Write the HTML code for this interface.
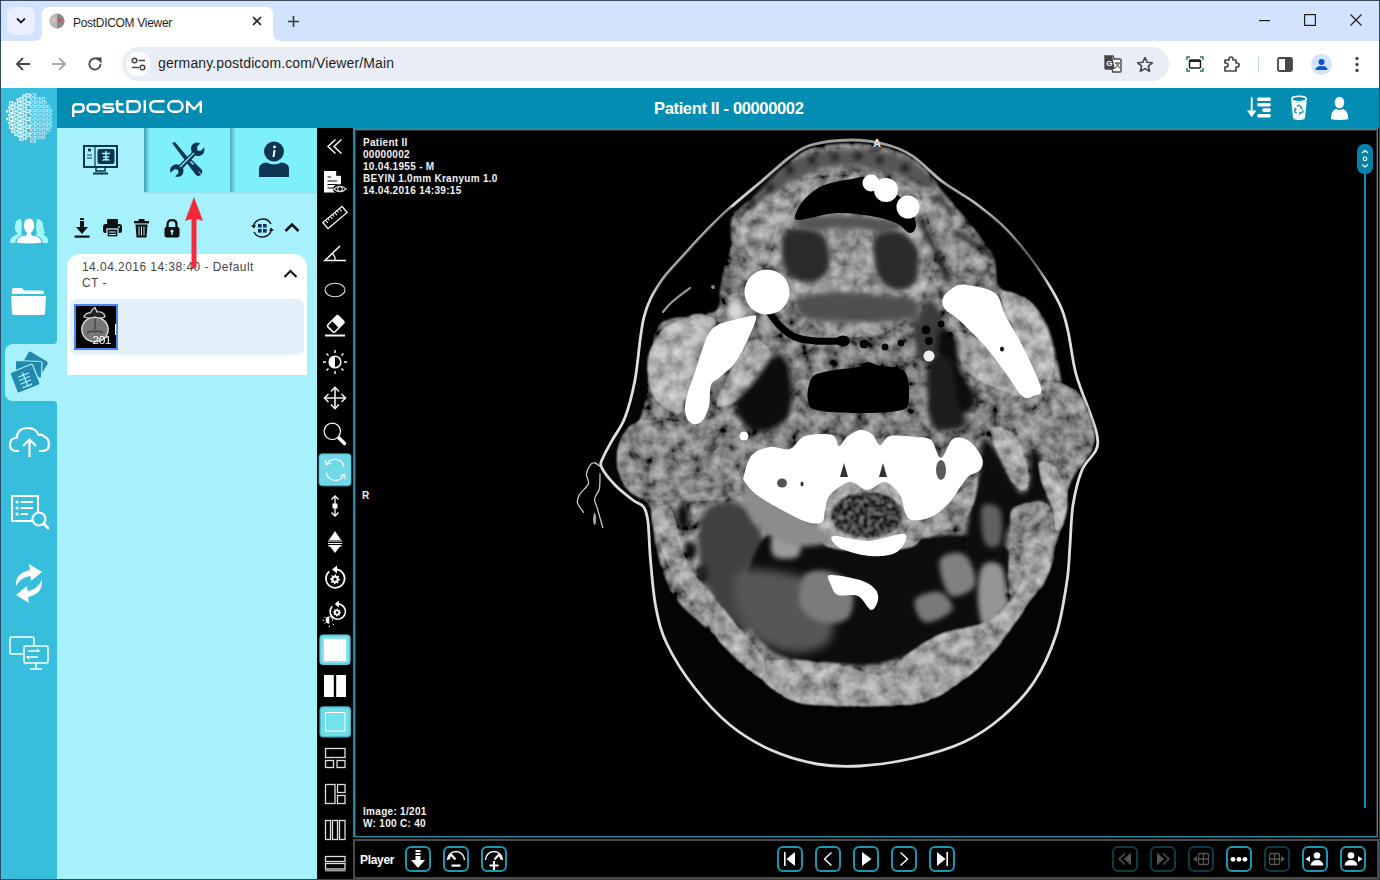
<!DOCTYPE html>
<html><head><meta charset="utf-8">
<style>
*{margin:0;padding:0;box-sizing:border-box}
html,body{width:1380px;height:880px;overflow:hidden;background:#fff;font-family:"Liberation Sans",sans-serif;position:relative}
.abs{position:absolute}
svg{position:absolute;overflow:visible}
.t{position:absolute;white-space:nowrap;line-height:1}
</style></head><body>
<div class="abs" style="left:0;top:0;width:1380px;height:41px;background:#d3e3fd"></div>
<div class="abs" style="left:0;top:41px;width:1380px;height:47px;background:#fff"></div>
<!-- CHROME -->
<div class="abs" style="left:0;top:0;width:1380px;height:1px;background:#3a4a5c"></div>
<div class="abs" style="left:0;top:0;width:1px;height:880px;background:#2b4a66;z-index:50"></div>
<div class="abs" style="left:1379px;top:0;width:1px;height:880px;background:#2b4a66;z-index:50"></div>
<!-- dropdown -->
<div class="abs" style="left:7px;top:7px;width:28px;height:28px;border-radius:8px;background:#e9effc"></div>
<svg style="left:15px;top:16px" width="12" height="10"><path d="M2 2.5 L6 6.5 L10 2.5" stroke="#1f1f1f" stroke-width="1.8" fill="none"/></svg>
<!-- tab -->
<svg style="left:34px;top:7px" width="248" height="34"><path d="M0 34 Q8 34 8 26 L8 8 Q8 0 16 0 L231 0 Q239 0 239 8 L239 26 Q239 34 247 34 Z" fill="#fff"/></svg>
<!-- favicon -->
<svg style="left:49px;top:13px" width="16" height="16"><circle cx="8" cy="8" r="7.5" fill="#b8b8b8"/><path d="M8 0.5 A7.5 7.5 0 0 1 8 15.5 Z" fill="#8a8a8a"/><circle cx="5" cy="7" r="2.2" fill="#f3b8c0" opacity=".8"/><circle cx="11" cy="7" r="1.6" fill="#e8394a"/></svg>
<div class="t" style="left:73px;top:16.5px;font-size:12px;color:#1f1f1f;letter-spacing:-0.3px">PostDICOM Viewer</div>
<svg style="left:252px;top:16px" width="10" height="10"><path d="M1 1 L9 9 M9 1 L1 9" stroke="#1f1f1f" stroke-width="1.6"/></svg>
<svg style="left:288px;top:16px" width="11" height="11"><path d="M5.5 0 V11 M0 5.5 H11" stroke="#3a3a3a" stroke-width="1.6"/></svg>
<!-- window controls -->
<svg style="left:1259px;top:20px" width="11" height="2"><rect width="11" height="1.2" fill="#1f1f1f"/></svg>
<svg style="left:1304px;top:14px" width="12" height="12"><rect x="0.6" y="0.6" width="10.8" height="10.8" stroke="#1f1f1f" stroke-width="1.2" fill="none"/></svg>
<svg style="left:1350px;top:14px" width="12" height="12"><path d="M0.5 0.5 L11.5 11.5 M11.5 0.5 L0.5 11.5" stroke="#1f1f1f" stroke-width="1.2"/></svg>
<!-- nav buttons -->
<svg style="left:15px;top:56px" width="16" height="16"><path d="M15 8 H2 M8 2 L2 8 L8 14" stroke="#474747" stroke-width="1.8" fill="none"/></svg>
<svg style="left:51px;top:56px" width="16" height="16"><path d="M1 8 H14 M8 2 L14 8 L8 14" stroke="#a8a8a8" stroke-width="1.8" fill="none"/></svg>
<svg style="left:87px;top:56px" width="16" height="16"><path d="M13.5 8 A5.6 5.6 0 1 1 11.6 3.8" stroke="#474747" stroke-width="1.8" fill="none"/><path d="M8.5 1.5 L14.5 1.5 L14.5 7.5 Z" fill="#474747"/></svg>
<!-- omnibox -->
<div class="abs" style="left:122px;top:47px;width:1047px;height:34px;border-radius:17px;background:#e9eef6"></div>
<div class="abs" style="left:126px;top:52px;width:24px;height:24px;border-radius:12px;background:#fff"></div>
<svg style="left:131px;top:57px" width="16" height="14"><circle cx="3.5" cy="3.5" r="2.3" stroke="#474747" stroke-width="1.5" fill="none"/><path d="M7.5 3.5 H14 M1 10.5 H8" stroke="#474747" stroke-width="1.7"/><circle cx="11.5" cy="10.5" r="2.3" stroke="#474747" stroke-width="1.5" fill="none"/></svg>
<div class="t" style="left:158px;top:56px;font-size:14px;color:#1f1f1f;letter-spacing:0.12px">germany.postdicom.com/Viewer/Main</div>
<!-- translate -->
<svg style="left:1104px;top:55px" width="18" height="18"><path d="M1 1 H9 L10 4 H16 Q17 4 17 5 V16 Q17 17 16 17 H9 L8 14 H2 Q1 14 1 13 Z" fill="#fff" stroke="#474747" stroke-width="1.4"/><path d="M1 1 H8 L11 14 H2 Q1 14 1 13 Z" fill="#474747"/><text x="2.3" y="11" font-size="8" font-weight="bold" fill="#fff" font-family="Liberation Sans">G</text><path d="M11 8 H16 M13.5 7 V8 M12 8 Q13 12 16 13 M15 8 Q14 12 11 13" stroke="#474747" stroke-width="1" fill="none"/></svg>
<svg style="left:1136px;top:56px" width="18" height="17"><path d="M9 1.5 L11.2 6.3 L16.3 6.8 L12.4 10.2 L13.6 15.3 L9 12.6 L4.4 15.3 L5.6 10.2 L1.7 6.8 L6.8 6.3 Z" stroke="#474747" stroke-width="1.6" fill="none" stroke-linejoin="round"/></svg>
<!-- screen capture -->
<svg style="left:1186px;top:56px" width="18" height="16"><path d="M1 4 V1 H4 M14 1 H17 V4 M17 12 V15 H14 M4 15 H1 V12" stroke="#188038" stroke-width="1.4" fill="none"/><rect x="3.5" y="4" width="11" height="8" rx="1" stroke="#1f1f1f" stroke-width="1.5" fill="none"/><rect x="3.5" y="4" width="11" height="2" fill="#1f1f1f"/></svg>
<!-- puzzle -->
<svg style="left:1223px;top:55px" width="18" height="18"><path d="M2 5 H6 V4 A2 2 0 0 1 10 4 V5 H13 V8 H14 A2 2 0 0 1 14 12 H13 V16 H2 V12 H3 A2 2 0 0 0 3 8 H2 Z" stroke="#474747" stroke-width="1.7" fill="none" stroke-linejoin="round"/></svg>
<div class="abs" style="left:1258px;top:57px;width:1px;height:15px;background:#c4d6f5"></div>
<svg style="left:1277px;top:57px" width="16" height="15"><rect x="1" y="1" width="14" height="13" rx="1.5" stroke="#474747" stroke-width="1.8" fill="none"/><rect x="8" y="1" width="7" height="13" fill="#474747"/></svg>
<div class="abs" style="left:1311px;top:54px;width:21px;height:21px;border-radius:50%;background:#d3e3fd"></div>
<svg style="left:1313px;top:56px" width="17" height="17"><circle cx="8.5" cy="6" r="3" fill="#0b57d0"/><path d="M2.5 14 Q2.5 10 8.5 10 Q14.5 10 14.5 14 Z" fill="#0b57d0"/></svg>
<svg style="left:1354px;top:56px" width="6" height="17"><circle cx="3" cy="2.5" r="1.7" fill="#474747"/><circle cx="3" cy="8.5" r="1.7" fill="#474747"/><circle cx="3" cy="14.5" r="1.7" fill="#474747"/></svg>
<!-- APP BASE -->
<div class="abs" style="left:0;top:88px;width:1380px;height:792px;background:#000"></div>
<div class="abs" style="left:57px;top:88px;width:1323px;height:40px;background:#038db2"></div>
<div class="abs" style="left:57px;top:128px;width:260px;height:752px;background:#a6f1fc"></div>
<div class="abs" style="left:48px;top:330px;width:12px;height:85px;background:#a6f1fc"></div>
<div class="abs" style="left:0;top:88px;width:57px;height:256px;background:#38bedd;border-bottom-right-radius:4px"></div>
<div class="abs" style="left:0;top:401px;width:57px;height:479px;background:#38bedd;border-top-right-radius:4px"></div>
<div class="abs" style="left:0;top:330px;width:16px;height:80px;background:#38bedd"></div>
<div class="abs" style="left:5px;top:344px;width:60px;height:57px;background:#a6f1fc;border-radius:8px 0 0 8px"></div>
<!-- logo globe -->
<svg style="left:0;top:0" width="60" height="150"><rect x="26.0" y="94.0" width="3.2" height="3.2" fill="none" stroke="#fff" stroke-width="1.1"/><rect x="22.4" y="94.5" width="2.4" height="2.4" fill="#fff" opacity=".85"/><rect x="24.5" y="98.4" width="2.4" height="2.4" fill="#fff" opacity=".85"/><rect x="19.9" y="97.9" width="3.2" height="3.2" fill="none" stroke="#fff" stroke-width="1.1"/><rect x="16.3" y="98.4" width="2.4" height="2.4" fill="#fff" opacity=".85"/><rect x="26.0" y="101.8" width="3.2" height="3.2" fill="none" stroke="#fff" stroke-width="1.1"/><rect x="22.4" y="102.3" width="2.4" height="2.4" fill="#fff" opacity=".85"/><rect x="17.8" y="101.8" width="3.2" height="3.2" fill="none" stroke="#fff" stroke-width="1.1"/><rect x="14.2" y="102.3" width="2.4" height="2.4" fill="#fff" opacity=".85"/><rect x="9.6" y="101.8" width="3.2" height="3.2" fill="none" stroke="#fff" stroke-width="1.1"/><rect x="24.5" y="106.2" width="2.4" height="2.4" fill="#fff" opacity=".85"/><rect x="19.9" y="105.7" width="3.2" height="3.2" fill="none" stroke="#fff" stroke-width="1.1"/><rect x="16.3" y="106.2" width="2.4" height="2.4" fill="#fff" opacity=".85"/><rect x="11.7" y="105.7" width="3.2" height="3.2" fill="none" stroke="#fff" stroke-width="1.1"/><rect x="8.1" y="106.2" width="2.4" height="2.4" fill="#fff" opacity=".85"/><rect x="26.0" y="109.6" width="3.2" height="3.2" fill="none" stroke="#fff" stroke-width="1.1"/><rect x="22.4" y="110.1" width="2.4" height="2.4" fill="#fff" opacity=".85"/><rect x="17.8" y="109.6" width="3.2" height="3.2" fill="none" stroke="#fff" stroke-width="1.1"/><rect x="14.2" y="110.1" width="2.4" height="2.4" fill="#fff" opacity=".85"/><rect x="9.6" y="109.6" width="3.2" height="3.2" fill="none" stroke="#fff" stroke-width="1.1"/><rect x="6.0" y="110.1" width="2.4" height="2.4" fill="#fff" opacity=".85"/><rect x="24.5" y="114.0" width="2.4" height="2.4" fill="#fff" opacity=".85"/><rect x="19.9" y="113.5" width="3.2" height="3.2" fill="none" stroke="#fff" stroke-width="1.1"/><rect x="16.3" y="114.0" width="2.4" height="2.4" fill="#fff" opacity=".85"/><rect x="11.7" y="113.5" width="3.2" height="3.2" fill="none" stroke="#fff" stroke-width="1.1"/><rect x="8.1" y="114.0" width="2.4" height="2.4" fill="#fff" opacity=".85"/><rect x="26.0" y="117.4" width="3.2" height="3.2" fill="none" stroke="#fff" stroke-width="1.1"/><rect x="22.4" y="117.9" width="2.4" height="2.4" fill="#fff" opacity=".85"/><rect x="17.8" y="117.4" width="3.2" height="3.2" fill="none" stroke="#fff" stroke-width="1.1"/><rect x="14.2" y="117.9" width="2.4" height="2.4" fill="#fff" opacity=".85"/><rect x="9.6" y="117.4" width="3.2" height="3.2" fill="none" stroke="#fff" stroke-width="1.1"/><rect x="6.0" y="117.9" width="2.4" height="2.4" fill="#fff" opacity=".85"/><rect x="24.5" y="121.8" width="2.4" height="2.4" fill="#fff" opacity=".85"/><rect x="19.9" y="121.3" width="3.2" height="3.2" fill="none" stroke="#fff" stroke-width="1.1"/><rect x="16.3" y="121.8" width="2.4" height="2.4" fill="#fff" opacity=".85"/><rect x="11.7" y="121.3" width="3.2" height="3.2" fill="none" stroke="#fff" stroke-width="1.1"/><rect x="8.1" y="121.8" width="2.4" height="2.4" fill="#fff" opacity=".85"/><rect x="26.0" y="125.2" width="3.2" height="3.2" fill="none" stroke="#fff" stroke-width="1.1"/><rect x="22.4" y="125.7" width="2.4" height="2.4" fill="#fff" opacity=".85"/><rect x="17.8" y="125.2" width="3.2" height="3.2" fill="none" stroke="#fff" stroke-width="1.1"/><rect x="14.2" y="125.7" width="2.4" height="2.4" fill="#fff" opacity=".85"/><rect x="9.6" y="125.2" width="3.2" height="3.2" fill="none" stroke="#fff" stroke-width="1.1"/><rect x="24.5" y="129.6" width="2.4" height="2.4" fill="#fff" opacity=".85"/><rect x="19.9" y="129.1" width="3.2" height="3.2" fill="none" stroke="#fff" stroke-width="1.1"/><rect x="16.3" y="129.6" width="2.4" height="2.4" fill="#fff" opacity=".85"/><rect x="11.7" y="129.1" width="3.2" height="3.2" fill="none" stroke="#fff" stroke-width="1.1"/><rect x="26.0" y="133.0" width="3.2" height="3.2" fill="none" stroke="#fff" stroke-width="1.1"/><rect x="22.4" y="133.5" width="2.4" height="2.4" fill="#fff" opacity=".85"/><rect x="17.8" y="133.0" width="3.2" height="3.2" fill="none" stroke="#fff" stroke-width="1.1"/><rect x="14.2" y="133.5" width="2.4" height="2.4" fill="#fff" opacity=".85"/><rect x="24.5" y="137.4" width="2.4" height="2.4" fill="#fff" opacity=".85"/><rect x="19.9" y="136.9" width="3.2" height="3.2" fill="none" stroke="#fff" stroke-width="1.1"/><rect x="30.0" y="93.5" width="0.9" height="3" fill="#fff" opacity=".75"/><rect x="31.8" y="93.8" width="2.6" height="2.6" fill="none" stroke="#fff" stroke-width=".7" opacity=".7"/><rect x="35.2" y="93.5" width="0.9" height="3" fill="#fff" opacity=".75"/><rect x="30.0" y="97.3" width="0.9" height="3" fill="#fff" opacity=".75"/><rect x="31.8" y="97.6" width="2.6" height="2.6" fill="none" stroke="#fff" stroke-width=".7" opacity=".7"/><rect x="35.2" y="97.3" width="0.9" height="3" fill="#fff" opacity=".75"/><rect x="37.0" y="97.6" width="2.6" height="2.6" fill="none" stroke="#fff" stroke-width=".7" opacity=".7"/><rect x="40.4" y="97.3" width="0.9" height="3" fill="#fff" opacity=".75"/><rect x="42.2" y="97.6" width="2.6" height="2.6" fill="none" stroke="#fff" stroke-width=".7" opacity=".7"/><rect x="30.0" y="101.2" width="0.9" height="3" fill="#fff" opacity=".75"/><rect x="31.8" y="101.5" width="2.6" height="2.6" fill="none" stroke="#fff" stroke-width=".7" opacity=".7"/><rect x="35.2" y="101.2" width="0.9" height="3" fill="#fff" opacity=".75"/><rect x="37.0" y="101.5" width="2.6" height="2.6" fill="none" stroke="#fff" stroke-width=".7" opacity=".7"/><rect x="40.4" y="101.2" width="0.9" height="3" fill="#fff" opacity=".75"/><rect x="42.2" y="101.5" width="2.6" height="2.6" fill="none" stroke="#fff" stroke-width=".7" opacity=".7"/><rect x="45.6" y="101.2" width="0.9" height="3" fill="#fff" opacity=".75"/><rect x="30.0" y="105.0" width="0.9" height="3" fill="#fff" opacity=".75"/><rect x="31.8" y="105.3" width="2.6" height="2.6" fill="none" stroke="#fff" stroke-width=".7" opacity=".7"/><rect x="35.2" y="105.0" width="0.9" height="3" fill="#fff" opacity=".75"/><rect x="37.0" y="105.3" width="2.6" height="2.6" fill="none" stroke="#fff" stroke-width=".7" opacity=".7"/><rect x="40.4" y="105.0" width="0.9" height="3" fill="#fff" opacity=".75"/><rect x="42.2" y="105.3" width="2.6" height="2.6" fill="none" stroke="#fff" stroke-width=".7" opacity=".7"/><rect x="45.6" y="105.0" width="0.9" height="3" fill="#fff" opacity=".75"/><rect x="47.4" y="105.3" width="2.6" height="2.6" fill="none" stroke="#fff" stroke-width=".7" opacity=".7"/><rect x="30.0" y="108.9" width="0.9" height="3" fill="#fff" opacity=".75"/><rect x="31.8" y="109.2" width="2.6" height="2.6" fill="none" stroke="#fff" stroke-width=".7" opacity=".7"/><rect x="35.2" y="108.9" width="0.9" height="3" fill="#fff" opacity=".75"/><rect x="37.0" y="109.2" width="2.6" height="2.6" fill="none" stroke="#fff" stroke-width=".7" opacity=".7"/><rect x="40.4" y="108.9" width="0.9" height="3" fill="#fff" opacity=".75"/><rect x="42.2" y="109.2" width="2.6" height="2.6" fill="none" stroke="#fff" stroke-width=".7" opacity=".7"/><rect x="45.6" y="108.9" width="0.9" height="3" fill="#fff" opacity=".75"/><rect x="47.4" y="109.2" width="2.6" height="2.6" fill="none" stroke="#fff" stroke-width=".7" opacity=".7"/><rect x="50.8" y="108.9" width="0.9" height="3" fill="#fff" opacity=".75"/><rect x="30.0" y="112.8" width="0.9" height="3" fill="#fff" opacity=".75"/><rect x="31.8" y="113.0" width="2.6" height="2.6" fill="none" stroke="#fff" stroke-width=".7" opacity=".7"/><rect x="35.2" y="112.8" width="0.9" height="3" fill="#fff" opacity=".75"/><rect x="37.0" y="113.0" width="2.6" height="2.6" fill="none" stroke="#fff" stroke-width=".7" opacity=".7"/><rect x="40.4" y="112.8" width="0.9" height="3" fill="#fff" opacity=".75"/><rect x="42.2" y="113.0" width="2.6" height="2.6" fill="none" stroke="#fff" stroke-width=".7" opacity=".7"/><rect x="45.6" y="112.8" width="0.9" height="3" fill="#fff" opacity=".75"/><rect x="47.4" y="113.0" width="2.6" height="2.6" fill="none" stroke="#fff" stroke-width=".7" opacity=".7"/><rect x="50.8" y="112.8" width="0.9" height="3" fill="#fff" opacity=".75"/><rect x="30.0" y="116.6" width="0.9" height="3" fill="#fff" opacity=".75"/><rect x="31.8" y="116.9" width="2.6" height="2.6" fill="none" stroke="#fff" stroke-width=".7" opacity=".7"/><rect x="35.2" y="116.6" width="0.9" height="3" fill="#fff" opacity=".75"/><rect x="37.0" y="116.9" width="2.6" height="2.6" fill="none" stroke="#fff" stroke-width=".7" opacity=".7"/><rect x="40.4" y="116.6" width="0.9" height="3" fill="#fff" opacity=".75"/><rect x="42.2" y="116.9" width="2.6" height="2.6" fill="none" stroke="#fff" stroke-width=".7" opacity=".7"/><rect x="45.6" y="116.6" width="0.9" height="3" fill="#fff" opacity=".75"/><rect x="47.4" y="116.9" width="2.6" height="2.6" fill="none" stroke="#fff" stroke-width=".7" opacity=".7"/><rect x="50.8" y="116.6" width="0.9" height="3" fill="#fff" opacity=".75"/><rect x="30.0" y="120.5" width="0.9" height="3" fill="#fff" opacity=".75"/><rect x="31.8" y="120.8" width="2.6" height="2.6" fill="none" stroke="#fff" stroke-width=".7" opacity=".7"/><rect x="35.2" y="120.5" width="0.9" height="3" fill="#fff" opacity=".75"/><rect x="37.0" y="120.8" width="2.6" height="2.6" fill="none" stroke="#fff" stroke-width=".7" opacity=".7"/><rect x="40.4" y="120.5" width="0.9" height="3" fill="#fff" opacity=".75"/><rect x="42.2" y="120.8" width="2.6" height="2.6" fill="none" stroke="#fff" stroke-width=".7" opacity=".7"/><rect x="45.6" y="120.5" width="0.9" height="3" fill="#fff" opacity=".75"/><rect x="47.4" y="120.8" width="2.6" height="2.6" fill="none" stroke="#fff" stroke-width=".7" opacity=".7"/><rect x="50.8" y="120.5" width="0.9" height="3" fill="#fff" opacity=".75"/><rect x="30.0" y="124.3" width="0.9" height="3" fill="#fff" opacity=".75"/><rect x="31.8" y="124.6" width="2.6" height="2.6" fill="none" stroke="#fff" stroke-width=".7" opacity=".7"/><rect x="35.2" y="124.3" width="0.9" height="3" fill="#fff" opacity=".75"/><rect x="37.0" y="124.6" width="2.6" height="2.6" fill="none" stroke="#fff" stroke-width=".7" opacity=".7"/><rect x="40.4" y="124.3" width="0.9" height="3" fill="#fff" opacity=".75"/><rect x="42.2" y="124.6" width="2.6" height="2.6" fill="none" stroke="#fff" stroke-width=".7" opacity=".7"/><rect x="45.6" y="124.3" width="0.9" height="3" fill="#fff" opacity=".75"/><rect x="47.4" y="124.6" width="2.6" height="2.6" fill="none" stroke="#fff" stroke-width=".7" opacity=".7"/><rect x="50.8" y="124.3" width="0.9" height="3" fill="#fff" opacity=".75"/><rect x="30.0" y="128.2" width="0.9" height="3" fill="#fff" opacity=".75"/><rect x="31.8" y="128.5" width="2.6" height="2.6" fill="none" stroke="#fff" stroke-width=".7" opacity=".7"/><rect x="35.2" y="128.2" width="0.9" height="3" fill="#fff" opacity=".75"/><rect x="37.0" y="128.5" width="2.6" height="2.6" fill="none" stroke="#fff" stroke-width=".7" opacity=".7"/><rect x="40.4" y="128.2" width="0.9" height="3" fill="#fff" opacity=".75"/><rect x="42.2" y="128.5" width="2.6" height="2.6" fill="none" stroke="#fff" stroke-width=".7" opacity=".7"/><rect x="45.6" y="128.2" width="0.9" height="3" fill="#fff" opacity=".75"/><rect x="47.4" y="128.5" width="2.6" height="2.6" fill="none" stroke="#fff" stroke-width=".7" opacity=".7"/><rect x="30.0" y="132.0" width="0.9" height="3" fill="#fff" opacity=".75"/><rect x="31.8" y="132.3" width="2.6" height="2.6" fill="none" stroke="#fff" stroke-width=".7" opacity=".7"/><rect x="35.2" y="132.0" width="0.9" height="3" fill="#fff" opacity=".75"/><rect x="37.0" y="132.3" width="2.6" height="2.6" fill="none" stroke="#fff" stroke-width=".7" opacity=".7"/><rect x="40.4" y="132.0" width="0.9" height="3" fill="#fff" opacity=".75"/><rect x="42.2" y="132.3" width="2.6" height="2.6" fill="none" stroke="#fff" stroke-width=".7" opacity=".7"/><rect x="45.6" y="132.0" width="0.9" height="3" fill="#fff" opacity=".75"/><rect x="30.0" y="135.8" width="0.9" height="3" fill="#fff" opacity=".75"/><rect x="31.8" y="136.2" width="2.6" height="2.6" fill="none" stroke="#fff" stroke-width=".7" opacity=".7"/><rect x="35.2" y="135.8" width="0.9" height="3" fill="#fff" opacity=".75"/><rect x="37.0" y="136.2" width="2.6" height="2.6" fill="none" stroke="#fff" stroke-width=".7" opacity=".7"/><rect x="40.4" y="135.8" width="0.9" height="3" fill="#fff" opacity=".75"/><rect x="42.2" y="136.2" width="2.6" height="2.6" fill="none" stroke="#fff" stroke-width=".7" opacity=".7"/><rect x="30.0" y="139.7" width="0.9" height="3" fill="#fff" opacity=".75"/><rect x="31.8" y="140.0" width="2.6" height="2.6" fill="none" stroke="#fff" stroke-width=".7" opacity=".7"/><rect x="35.2" y="139.7" width="0.9" height="3" fill="#fff" opacity=".75"/></svg>
<!-- postDICOM wordmark -->
<svg style="left:0;top:0" width="210" height="120"><g fill="none" stroke="#fff" stroke-width="2.4" stroke-linejoin="round">
<path d="M73.2 117 V107.5 Q73.2 104.2 76.5 104.2 H80.3 Q83.6 104.2 83.6 107.5 V108.5 Q83.6 111.7 80.3 111.7 H73.2"/>
<rect x="87.5" y="104.2" width="11.8" height="7.5" rx="3.3"/>
<path d="M113.6 104.2 H106.3 Q103.3 104.2 103.3 106.1 Q103.3 107.9 106.3 107.9 H110.3 Q113.3 107.9 113.3 109.8 Q113.3 111.7 110.3 111.7 H102.8"/>
<path d="M117.3 100 V108.3 Q117.3 111.7 120.7 111.7 H124.3 M115.5 104.2 H123.3"/>
<path d="M127.5 101.3 V111.7 H135.3 Q139.8 111.7 139.8 106.5 Q139.8 101.3 135.3 101.3 Z"/>
<path d="M144.8 100.2 V112.9"/>
<path d="M164.5 101.3 H155.5 Q150.3 101.3 150.3 106.5 Q150.3 111.7 155.5 111.7 H164.5"/>
<rect x="168.3" y="101.3" width="14.2" height="10.4" rx="5"/>
<path d="M187.2 112.9 V101.8 L194 109.2 L200.8 101.8 V112.9"/>
</g></svg>
<!-- title -->
<div class="t" style="left:654px;top:99.5px;font-size:16.5px;font-weight:bold;color:#fff;letter-spacing:-0.35px">Patient II - 00000002</div>
<!-- header right icons -->
<svg style="left:1240px;top:90px" width="120" height="36">
<path d="M11.7 7.4 V22" stroke="#fff" stroke-width="1.9"/><path d="M7 20.5 L11.7 27.2 L16.4 20.5 Z" fill="#fff"/>
<rect x="17" y="7.4" width="14" height="3.6" rx="1.8" fill="#fff"/><rect x="17" y="13" width="14" height="3.6" rx="1.8" fill="#fff"/><rect x="22" y="18.3" width="9" height="3.6" rx="1.8" fill="#fff"/><rect x="17" y="23.9" width="14" height="3.6" rx="1.8" fill="#fff"/>
<ellipse cx="59" cy="9" rx="7.3" ry="2.7" stroke="#fff" stroke-width="1.5" fill="none"/>
<path d="M51.3 11 Q59 14 66.7 11 L65 28 Q59 30 53 28 Z" fill="#fff"/>
<path d="M53.5 28.8 Q59 30.5 64.5 28.8" stroke="#fff" stroke-width="1" fill="none"/>
<g stroke="#038db2" stroke-width="1.2" fill="none"><path d="M57 16.5 L59 15 L61.5 17.5"/><path d="M62.8 19.5 L63 22 L60 23"/><path d="M57 23 L54.5 22 L55.5 19"/></g>
<g fill="#038db2"><path d="M61 16 L63 18.5 L60.5 19 Z"/><path d="M61 23.5 L59 25 L59.5 21.8 Z"/><path d="M54 20.5 L55 17.5 L57 19.5 Z"/></g>
<ellipse cx="99.5" cy="12.6" rx="4.8" ry="5.8" fill="#fff"/>
<path d="M91 29.2 Q90.6 20.5 96 19 Q99.5 20.8 103 19 Q108.4 20.5 108.3 29.2 Q99.5 30.8 91 29.2 Z" fill="#fff"/>
</svg>
<!-- nav icons -->
<svg style="left:9px;top:217px" width="40" height="28">
 <path d="M12 2 Q6 2 6 9 Q5 11 6 12 Q7 16 9 17 Q3 19 1 23 V26 H12 Q12 21 16 19 L12 17 Q13 13 13 8 Z" fill="#a4f6fb"/>
 <path d="M28 2 Q34 2 34 9 Q35 14 36 16 L34 17 Q37 19 39 22 V26 H28 Q28 21 24 19 L28 17 Q27 13 27 8 Z" fill="#a4f6fb"/>
 <path d="M20 1 Q25.5 1 25.5 8 Q26.5 9 25.5 11 Q24.5 15 22.5 16 L23 18 Q33 19 33 26 Q20 28 7 26 Q7 19 17 18 L17.5 16 Q15.5 15 14.5 11 Q13.5 9 14.5 8 Q14.5 1 20 1 Z" fill="#fff" stroke="#38bedd" stroke-width="1.2"/>
</svg>
<svg style="left:11px;top:287px" width="36" height="29"><path d="M1 3 Q1 1 3 1 H11 L13 3.5 H31 Q33 3.5 33 5.5 V7 H1 Z" fill="#fff"/><path d="M0 9 H35 L34 26 Q34 28 32 28 H3 Q1 28 1 26 Z" fill="#fff"/></svg>
<svg style="left:4px;top:340px" width="56" height="65">
 <path d="M24.5 12.5 Q25.5 11 27 12 L43 21.5 Q44.5 22.5 43.5 24 L35 38 L18 24 Z" fill="#2388ad"/>
 <path d="M11.5 22 Q11.5 20.5 13 20.5 L36.5 21.5 Q38 21.5 38 23 L37.5 38 L11 36 Z" fill="#2388ad" stroke="#a6f1fc" stroke-width="1.2"/>
 <path d="M6.5 35 Q5.5 33.5 7 32.5 L26.5 24.5 Q28 24 28.8 25.5 L36 43 Q36.5 44.5 35 45 L15 53 Q13.5 53.5 13 52 Z" fill="#2388ad" stroke="#a6f1fc" stroke-width="1.3"/>
 <g stroke="#a6f1fc" stroke-width="1.3" fill="none" stroke-linecap="round"><path d="M18.5 33 L24 46"/><path d="M14.5 37 L24.5 33 M15.5 40.5 L25.5 36.5 M17 44 L26.5 40"/><path d="M19 47.5 Q22 47 23.5 45.5 Q26 46 27.5 44"/></g>
</svg>
<svg style="left:9px;top:426px" width="41" height="32"><path d="M10 25 H7 Q1 25 1 18.5 Q1 12 7.5 12 Q8.5 2 19 2 Q27 2 29.5 9 Q33 8 35 10.5 Q40 12 40 18.5 Q40 25 33 25 H30" stroke="#fff" stroke-width="2.2" fill="none"/><path d="M20.5 31 V14 M14 20 L20.5 13.5 L27 20" stroke="#fff" stroke-width="2.2" fill="none"/></svg>
<svg style="left:11px;top:495px" width="39" height="35"><rect x="1" y="1" width="26" height="25" stroke="#fff" stroke-width="2" fill="none"/><circle cx="6" cy="7" r="1.5" fill="#fff"/><circle cx="6" cy="13" r="1.5" fill="#fff"/><circle cx="6" cy="19" r="1.5" fill="#fff"/><path d="M9.5 7 H22 M9.5 13 H22 M9.5 19 H17" stroke="#fff" stroke-width="2"/><circle cx="28" cy="24" r="6.5" fill="#38bedd" stroke="#fff" stroke-width="2.2"/><path d="M32.5 28.5 L37 33" stroke="#fff" stroke-width="2.6" stroke-linecap="round"/></svg>
<svg style="left:13px;top:563px" width="32" height="41"><path d="M3 23 Q2 10 17 7 L16 1 L29 9 L18 18 L17.5 13 Q8 14 3 23 Z" fill="#fff"/><path d="M29 17 Q30 31 15 34 L16 40 L3 32 L14 23 L14.5 28 Q24 27 29 17 Z" fill="#fff"/></svg>
<svg style="left:9px;top:636px" width="41" height="35"><rect x="1" y="1" width="24" height="17" rx="1.5" stroke="#fff" stroke-width="1.5" fill="#38bedd"/><rect x="15" y="10" width="24" height="17" rx="1.5" stroke="#fff" stroke-width="1.5" fill="#38bedd"/><path d="M27 27 V32 M21 33 H33" stroke="#fff" stroke-width="1.5"/><path d="M19 15 H30 L28 13 M29 21 H18 L20 23" stroke="#fff" stroke-width="1.3" fill="none"/></svg>
<!-- PANEL -->
<div class="abs" style="left:57px;top:128px;width:87px;height:64px;background:#a6f1fc"></div>
<div class="abs" style="left:144px;top:128px;width:173px;height:64px;background:#7ef0fc"></div>
<div class="abs" style="left:144px;top:128px;width:6px;height:64px;background:linear-gradient(90deg,rgba(0,60,80,.45),rgba(0,60,80,0))"></div>
<div class="abs" style="left:230px;top:128px;width:6px;height:64px;background:linear-gradient(90deg,rgba(0,60,80,.4),rgba(0,60,80,0))"></div>
<div class="abs" style="left:144px;top:192px;width:173px;height:2px;background:linear-gradient(180deg,rgba(0,60,80,.12),rgba(0,60,80,0))"></div>
<!-- monitor icon -->
<svg style="left:83px;top:145px" width="36" height="31"><rect x="1" y="1" width="33" height="21" stroke="#0b3550" stroke-width="2" fill="none"/><path d="M12 2 V21" stroke="#0b3550" stroke-width="1.2"/><path d="M5 5 H8 M6.5 3.5 V6.5" stroke="#0b3550" stroke-width="2"/><path d="M4 10 H9 M4 13 H9" stroke="#0b3550" stroke-width="1"/><rect x="14.5" y="4" width="17" height="15" rx="2" fill="#0b3550"/><path d="M23 6 V16 M19 8.5 H27 M20 12 H26 M19.5 15.5 Q23 13 26.5 15.5" stroke="#a6f1fc" stroke-width="1.5" fill="none"/><path d="M13 23 V26 H22 V23" stroke="#0b3550" stroke-width="1.5" fill="none"/><path d="M10 28.5 H25" stroke="#0b3550" stroke-width="2"/></svg>
<!-- tools icon -->
<svg style="left:169px;top:141px" width="36" height="37">
 <path d="M3 2 L6 1 L21 19 L18 22 Z" fill="#0b3550"/>
 <path d="M17 21 L21 17 L33 29 Q34 31 32.5 33 L31 34.5 Q29 35.5 27 34 Z" fill="#0b3550"/>
 <path d="M21.5 20.5 L24.5 23.5" stroke="#7ef0fc" stroke-width="1.6"/>
 <path d="M29.5 30.5 L32 33" stroke="#7ef0fc" stroke-width="1"/>
 <path d="M28 1.5 Q22 2 22 8 Q22 10 23 11 L10 24 Q8 23 6 23.5 Q1 25 1 30 L1.5 31.5 L6 28 L9 29 L9.5 32 L6 35.5 Q14 37 14.5 30 Q14.5 28 14 27 L26.5 14.5 Q28 15 30 15 Q35.5 14 35.5 8 L35 6.5 L31.5 10 L28.5 9.5 L28 6 L31 2.2 Q30 1.5 28 1.5 Z" fill="#0b3550"/>
 <path d="M11 26 L25 12" stroke="#7ef0fc" stroke-width="1.2"/>
</svg>
<!-- info person icon -->
<svg style="left:258px;top:141px" width="32" height="37"><circle cx="16" cy="10.5" r="10" fill="#0b3550"/><path d="M16.5 4.5 a1.5 1.5 0 1 1 -0.01 0 M15.5 9 H17.5 L16.5 16 H14.5 Z" fill="#fff"/><path d="M1 36 V28 Q1 22 9 21.5 Q12 23.5 16 23.5 Q20 23.5 23 21.5 Q31 22 31 28 V36 Z" fill="#0b3550"/></svg>
<!-- action icons -->
<svg style="left:74px;top:218px" width="16" height="20"><rect x="6" y="0" width="4" height="2" fill="#111"/><path d="M6 3 H10 V9 H14 L8 16 L2 9 H6 Z" fill="#111"/><rect x="0.5" y="17.5" width="15" height="2.2" fill="#111"/></svg>
<svg style="left:103px;top:219px" width="19" height="18"><rect x="4" y="0" width="11" height="5" rx="1" fill="#111"/><rect x="0" y="5" width="19" height="9" rx="2.5" fill="#111"/><rect x="4" y="10" width="11" height="8" fill="#111" stroke="#a6f1fc" stroke-width="1.3"/><path d="M6 13 H13 M6 15.5 H13" stroke="#a6f1fc" stroke-width="1"/><circle cx="16" cy="8" r=".9" fill="#a6f1fc"/></svg>
<svg style="left:134px;top:219px" width="15" height="19"><rect x="4.5" y="0" width="6" height="2" fill="#111"/><rect x="0" y="2" width="15" height="2.4" fill="#111"/><path d="M1.5 5.5 H13.5 L12.5 18.5 H2.5 Z" fill="#111"/><path d="M5 7.5 V16.5 M7.5 7.5 V16.5 M10 7.5 V16.5" stroke="#a6f1fc" stroke-width="1"/></svg>
<svg style="left:164px;top:219px" width="16" height="19"><path d="M3.5 8 V5.5 Q3.5 1.2 8 1.2 Q12.5 1.2 12.5 5.5 V8" stroke="#111" stroke-width="2.3" fill="none"/><rect x="0.5" y="8" width="15" height="10.5" rx="2" fill="#111"/><circle cx="8" cy="12" r="1.6" fill="#a6f1fc"/><rect x="7.3" y="12" width="1.4" height="4" fill="#a6f1fc"/></svg>
<svg style="left:250px;top:217px" width="25" height="22"><path d="M3.5 9 A9.5 9.5 0 0 1 21 7" stroke="#111" stroke-width="1.4" fill="none"/><path d="M21.5 13 A9.5 9.5 0 0 1 4 15" stroke="#111" stroke-width="1.4" fill="none"/><path d="M1 8.5 L4 11.5 L6 8 Z M24 13.5 L21 10.5 L19 14 Z" fill="#111"/><rect x="8" y="7" width="3.6" height="3.6" fill="#142a5a"/><rect x="13" y="7" width="3.6" height="3.6" fill="#142a5a"/><rect x="8" y="12" width="3.6" height="3.6" fill="#142a5a"/><rect x="13" y="12" width="3.6" height="3.6" fill="#142a5a"/></svg>
<svg style="left:284px;top:222px" width="16" height="11"><path d="M1.5 9 L8 2.5 L14.5 9" stroke="#111" stroke-width="2.6" fill="none"/></svg>
<!-- study card -->
<div class="abs" style="left:67px;top:254px;width:240px;height:121px;background:#fff;border-radius:13px 13px 0 0"></div>
<div class="t" style="left:82px;top:259px;font-size:12px;line-height:16px;letter-spacing:0.45px;color:#45444a">14.04.2016 14:38:40 - Default<br>CT -</div>
<svg style="left:283px;top:269px" width="15" height="10"><path d="M1.5 8 L7.5 2 L13.5 8" stroke="#111" stroke-width="2.1" fill="none"/></svg>
<div class="abs" style="left:70px;top:299px;width:234px;height:56px;background:#e4f0fa;border-radius:7px"></div>
<div class="abs" style="left:74px;top:304px;width:44px;height:46px;background:#000;border:2px solid #4a86f7"></div>
<svg style="left:70px;top:300px" width="52" height="54">
<ellipse cx="25" cy="29.5" rx="13.2" ry="12.3" fill="#777" stroke="#e8e8e8" stroke-width="1.3"/>
<path d="M25 19 V30 M17 33 Q21 30 25 32 Q29 30 33 33" stroke="#3a3a3a" stroke-width="1.2" fill="none"/>
<path d="M14 16 Q17 12 20 13 L23 9 L25 7.5 L27 12 Q31 11 34 14 L35 17 Q30 19 25 17 Q19 19 14 17 Z" fill="#222" stroke="#ddd" stroke-width="1.2"/>
<rect x="45" y="24" width="1.2" height="11" fill="#fff"/>
</svg>
<div class="t" style="left:92.5px;top:335px;font-size:12px;color:#fff;letter-spacing:-0.5px;transform:scaleY(0.85);transform-origin:0 0">201</div>
<!-- red arrow -->
<svg style="left:184px;top:196px" width="20" height="72"><path d="M10 22 V70" stroke="#f8283c" stroke-width="5" stroke-linecap="round"/><path d="M10 1 L19 25 Q10 21 1 25 Z" fill="#f8283c"/></svg>
<!-- CT -->
<svg style="left:0;top:0" width="1380" height="880">
<defs>
<linearGradient id="skg" gradientUnits="userSpaceOnUse" x1="0" y1="138" x2="0" y2="215"><stop offset="0" stop-color="#9a9a9a"/><stop offset="1" stop-color="#dedede"/></linearGradient>
<clipPath id="vclip"><rect x="356" y="131" width="1020" height="705"/></clipPath>
<filter id="soft05" x="-50%" y="-50%" width="200%" height="200%"><feGaussianBlur stdDeviation=".6"/></filter>
<filter id="soft1" x="-20%" y="-20%" width="140%" height="140%"><feGaussianBlur stdDeviation="1.5"/></filter>
<filter id="soft2" x="-30%" y="-30%" width="160%" height="160%"><feGaussianBlur stdDeviation="5"/></filter>
<filter id="soft" x="-30%" y="-30%" width="160%" height="160%"><feGaussianBlur stdDeviation="2.5"/></filter>
<filter id="tex" x="-5%" y="-5%" width="110%" height="110%">
 <feGaussianBlur in="SourceGraphic" stdDeviation="1.2" result="b"/>
 <feTurbulence type="fractalNoise" baseFrequency="0.075" numOctaves="3" seed="5" result="n"/>
 <feColorMatrix in="n" type="matrix" values="1 0 0 0 0  1 0 0 0 0  1 0 0 0 0  0 0 0 0 1" result="g"/>
 <feComposite in="b" in2="g" operator="arithmetic" k1="0" k2="1" k3="0.7" k4="-0.35" result="m"/>
 <feComposite in="m" in2="b" operator="in"/>
</filter>
<filter id="tex2" x="-5%" y="-5%" width="110%" height="110%">
 <feTurbulence type="fractalNoise" baseFrequency="0.25" numOctaves="2" seed="9" result="n"/>
 <feColorMatrix in="n" type="matrix" values="1 0 0 0 0  1 0 0 0 0  1 0 0 0 0  0 0 0 0 1" result="g"/>
 <feComposite in="SourceGraphic" in2="g" operator="arithmetic" k1="0" k2="1" k3="0.6" k4="-0.3" result="m"/>
 <feComposite in="m" in2="SourceGraphic" operator="in" result="c"/>
 <feGaussianBlur in="c" stdDeviation="1"/>
</filter>
</defs>
<g clip-path="url(#vclip)">
<path d="M851.0 140.0 C863.5 139.9 875.8 141.9 886.0 144.5 C896.2 147.1 902.4 149.3 912.0 155.7 C921.6 162.1 933.0 174.8 943.6 182.7 C954.2 190.6 964.8 195.4 975.4 203.4 C986.0 211.4 996.2 219.0 1007.0 230.4 C1017.8 241.8 1031.2 259.3 1040.0 271.7 C1048.8 284.1 1055.3 295.1 1060.0 305.0 C1064.7 314.9 1065.3 319.5 1068.0 331.0 C1070.7 342.5 1072.3 360.3 1076.0 374.0 C1079.7 387.7 1086.5 402.8 1090.0 413.0 C1093.5 423.2 1096.0 428.8 1097.0 435.0 C1098.0 441.2 1098.5 444.2 1096.0 450.0 C1093.5 455.8 1085.8 460.8 1082.0 470.0 C1078.2 479.2 1075.0 492.5 1073.0 505.0 C1071.0 517.5 1071.0 532.3 1070.0 545.0 C1069.0 557.7 1069.3 566.0 1067.0 581.0 C1064.7 596.0 1061.5 618.2 1056.0 635.0 C1050.5 651.8 1043.0 668.3 1034.0 682.0 C1025.0 695.7 1013.7 707.0 1002.0 717.0 C990.3 727.0 978.7 735.2 964.0 742.0 C949.3 748.8 931.3 754.0 914.0 758.0 C896.7 762.0 876.2 765.0 860.0 766.0 C843.8 767.0 831.8 766.7 817.0 764.0 C802.2 761.3 785.5 756.5 771.0 750.0 C756.5 743.5 742.8 735.5 730.0 725.0 C717.2 714.5 704.5 700.5 694.0 687.0 C683.5 673.5 673.3 657.2 667.0 644.0 C660.7 630.8 658.8 622.0 656.0 608.0 C653.2 594.0 651.8 574.3 650.5 560.0 C649.2 545.7 649.1 530.8 648.0 522.0 C646.9 513.2 646.2 510.7 643.7 507.0 C641.2 503.3 637.6 503.7 632.8 500.0 C628.0 496.3 620.2 490.5 615.0 485.0 C609.8 479.5 603.4 471.6 601.4 467.0 C599.4 462.4 601.2 462.2 603.0 457.7 C604.8 453.2 608.6 446.7 612.3 440.0 C616.0 433.3 621.2 427.5 625.0 417.5 C628.8 407.5 631.8 396.8 635.0 380.0 C638.2 363.2 639.8 333.2 644.0 317.0 C648.2 300.8 653.3 293.3 660.0 283.0 C666.7 272.7 675.8 264.2 684.0 255.0 C692.2 245.8 701.2 236.0 709.0 228.0 C716.8 220.0 722.0 215.0 731.0 207.0 C740.0 199.0 753.2 188.3 763.0 180.0 C772.8 171.7 782.0 162.8 790.0 157.0 C798.0 151.2 800.8 147.8 811.0 145.0 C821.2 142.2 838.5 140.1 851.0 140.0Z" fill="#040404" stroke="url(#skg)" stroke-width="2.8"/>
<path d="M851.0 143.0 C863.5 142.9 875.8 145.0 886.0 147.5 C896.2 150.0 903.8 152.6 912.0 158.0 C920.2 163.4 925.5 169.5 935.0 180.0 C944.5 190.5 959.2 208.3 969.0 221.0 C978.8 233.7 988.8 245.0 994.0 256.0 C999.2 267.0 994.5 280.0 1000.0 287.0 C1005.5 294.0 1018.8 291.7 1027.0 298.0 C1035.2 304.3 1043.5 314.0 1049.0 325.0 C1054.5 336.0 1057.2 352.2 1060.0 364.0 C1062.8 375.8 1062.0 384.2 1066.0 396.0 C1070.0 407.8 1079.7 426.0 1084.0 435.0 C1088.3 444.0 1092.3 444.8 1092.0 450.0 C1091.7 455.2 1085.7 460.2 1082.0 466.0 C1078.3 471.8 1073.0 476.0 1070.0 485.0 C1067.0 494.0 1066.3 510.0 1064.0 520.0 C1061.7 530.0 1058.2 537.2 1056.0 545.0 C1053.8 552.8 1055.5 557.3 1051.0 567.0 C1046.5 576.7 1038.2 589.3 1029.0 603.0 C1019.8 616.7 1006.0 636.8 996.0 649.0 C986.0 661.2 980.3 667.3 969.0 676.0 C957.7 684.7 941.7 696.0 928.0 701.0 C914.3 706.0 903.2 705.2 887.0 706.0 C870.8 706.8 846.7 706.8 831.0 706.0 C815.3 705.2 804.3 705.5 793.0 701.0 C781.7 696.5 777.2 690.8 763.0 679.0 C748.8 667.2 723.0 644.0 708.0 630.0 C693.0 616.0 681.7 608.7 673.0 595.0 C664.3 581.3 659.8 562.5 656.0 548.0 C652.2 533.5 654.3 517.7 650.0 508.0 C645.7 498.3 635.5 496.8 630.0 490.0 C624.5 483.2 618.0 476.2 617.0 467.0 C616.0 457.8 620.2 443.2 624.0 435.0 C627.8 426.8 636.0 427.2 640.0 418.0 C644.0 408.8 646.2 391.3 648.0 380.0 C649.8 368.7 648.7 359.7 651.0 350.0 C653.3 340.3 654.8 328.0 662.0 322.0 C669.2 316.0 685.0 316.0 694.0 314.0 C703.0 312.0 711.8 313.8 716.0 310.0 C720.2 306.2 717.8 297.8 719.0 291.0 C720.2 284.2 721.2 276.8 723.0 269.0 C724.8 261.2 728.7 252.7 730.0 244.0 C731.3 235.3 725.5 226.2 731.0 217.0 C736.5 207.8 753.2 198.2 763.0 189.0 C772.8 179.8 782.0 168.8 790.0 162.0 C798.0 155.2 800.8 151.2 811.0 148.0 C821.2 144.8 838.5 143.1 851.0 143.0Z" fill="#7c7c7c" filter="url(#tex)"/>
<path d="M780.0 190.0 C790.8 181.8 810.0 177.3 830.0 176.0 C850.0 174.7 882.5 175.5 900.0 182.0 C917.5 188.5 929.2 202.0 935.0 215.0 C940.8 228.0 938.3 244.2 935.0 260.0 C931.7 275.8 924.2 297.5 915.0 310.0 C905.8 322.5 894.2 330.8 880.0 335.0 C865.8 339.2 843.3 338.3 830.0 335.0 C816.7 331.7 809.2 325.8 800.0 315.0 C790.8 304.2 780.8 285.0 775.0 270.0 C769.2 255.0 764.2 238.3 765.0 225.0 C765.8 211.7 769.2 198.2 780.0 190.0Z" fill="#979797" filter="url(#tex)"/>
<path d="M760.0 200.0 C768.3 193.0 783.3 178.7 790.0 178.0 C796.7 177.3 801.7 187.3 800.0 196.0 C798.3 204.7 785.8 218.5 780.0 230.0 C774.2 241.5 770.8 261.7 765.0 265.0 C759.2 268.3 749.2 257.5 745.0 250.0 C740.8 242.5 737.5 228.3 740.0 220.0 C742.5 211.7 751.7 207.0 760.0 200.0Z" fill="#9a9a9a" filter="url(#tex)"/>
<path d="M920.0 185.0 C923.3 179.2 945.8 195.8 955.0 205.0 C964.2 214.2 969.2 227.5 975.0 240.0 C980.8 252.5 992.5 273.3 990.0 280.0 C987.5 286.7 969.2 286.7 960.0 280.0 C950.8 273.3 941.7 255.8 935.0 240.0 C928.3 224.2 916.7 190.8 920.0 185.0Z" fill="#8a8a8a" filter="url(#tex)"/>
<path d="M790.0 163.0 C807.7 153.0 831.8 150.8 851.0 150.0 C870.2 149.2 891.0 152.7 905.0 158.0 C919.0 163.3 931.7 177.3 935.0 182.0 C938.3 186.7 932.5 187.7 925.0 186.0 C917.5 184.3 902.3 175.5 890.0 172.0 C877.7 168.5 864.3 165.0 851.0 165.0 C837.7 165.0 823.5 167.0 810.0 172.0 C796.5 177.0 780.8 188.7 770.0 195.0 C759.2 201.3 741.7 215.3 745.0 210.0 C748.3 204.7 772.3 173.0 790.0 163.0Z" fill="#555" filter="url(#soft)"/>
<circle cx="790" cy="170" r="4" fill="#1a1a1a" filter="url(#soft)"/>
<circle cx="812" cy="160" r="4" fill="#1a1a1a" filter="url(#soft)"/>
<circle cx="835" cy="157" r="3.5" fill="#1a1a1a" filter="url(#soft)"/>
<circle cx="858" cy="156" r="4" fill="#1a1a1a" filter="url(#soft)"/>
<circle cx="880" cy="160" r="3.5" fill="#1a1a1a" filter="url(#soft)"/>
<circle cx="905" cy="168" r="4" fill="#1a1a1a" filter="url(#soft)"/>
<circle cx="770" cy="188" r="4" fill="#1a1a1a" filter="url(#soft)"/>
<circle cx="752" cy="203" r="3.5" fill="#1a1a1a" filter="url(#soft)"/>
<circle cx="874" cy="206" r="3" fill="#1a1a1a" filter="url(#soft)"/>
<circle cx="935" cy="200" r="3" fill="#1a1a1a" filter="url(#soft)"/>
<path d="M694.0 314.0 C701.5 312.5 708.3 315.0 712.0 317.0 C715.7 319.0 717.7 318.3 716.0 326.0 C714.3 333.7 706.8 351.3 702.0 363.0 C697.2 374.7 690.7 387.5 687.0 396.0 C683.3 404.5 683.8 412.0 680.0 414.0 C676.2 416.0 668.8 411.7 664.0 408.0 C659.2 404.3 653.8 399.5 651.0 392.0 C648.2 384.5 646.5 371.5 647.0 363.0 C647.5 354.5 650.7 347.2 654.0 341.0 C657.3 334.8 660.3 330.5 667.0 326.0 C673.7 321.5 686.5 315.5 694.0 314.0Z" fill="#b0b0b0" filter="url(#tex)"/>
<path d="M1000.0 293.0 C1002.7 288.5 1018.8 292.7 1027.0 298.0 C1035.2 303.3 1044.3 315.8 1049.0 325.0 C1053.7 334.2 1054.5 343.8 1055.0 353.0 C1055.5 362.2 1054.3 373.7 1052.0 380.0 C1049.7 386.3 1045.2 393.7 1041.0 391.0 C1036.8 388.3 1032.0 375.0 1027.0 364.0 C1022.0 353.0 1015.5 336.8 1011.0 325.0 C1006.5 313.2 997.3 297.5 1000.0 293.0Z" fill="#acacac" filter="url(#tex)"/>
<path d="M956.0 331.0 C960.7 329.2 975.3 335.2 984.0 342.0 C992.7 348.8 1001.7 363.0 1008.0 372.0 C1014.3 381.0 1023.3 392.8 1022.0 396.0 C1020.7 399.2 1008.7 394.5 1000.0 391.0 C991.3 387.5 977.3 381.3 970.0 375.0 C962.7 368.7 958.3 360.3 956.0 353.0 C953.7 345.7 951.3 332.8 956.0 331.0Z" fill="#a6a6a6" filter="url(#tex)"/>
<path d="M727.0 377.0 C732.5 366.2 742.3 346.3 749.0 341.0 C755.7 335.7 763.3 340.8 767.0 345.0 C770.7 349.2 773.3 358.8 771.0 366.0 C768.7 373.2 759.0 381.8 753.0 388.0 C747.0 394.2 741.2 400.0 735.0 403.0 C728.8 406.0 717.3 410.3 716.0 406.0 C714.7 401.7 721.5 387.8 727.0 377.0Z" fill="#a8a8a8" filter="url(#tex)"/>
<path d="M921.0 222.0 C923.3 226.7 930.3 240.3 935.0 250.0 C939.7 259.7 946.7 275.0 949.0 280.0" fill="none" stroke="#1e1e1e" stroke-width="5" stroke-linecap="round" filter="url(#soft)"/>
<path d="M957.0 233.0 C960.0 235.0 968.8 240.8 975.0 245.0 C981.2 249.2 990.8 255.8 994.0 258.0" fill="none" stroke="#222" stroke-width="5" stroke-linecap="round" filter="url(#soft)"/>
<path d="M940.0 200.0 C942.0 202.0 950.0 210.0 952.0 212.0" fill="none" stroke="#2a2a2a" stroke-width="4" stroke-linecap="round" filter="url(#soft)"/>
<path d="M731.0 208.0 C734.7 206.0 731.2 211.0 731.0 217.0 C730.8 223.0 731.3 235.3 730.0 244.0 C728.7 252.7 724.8 261.2 723.0 269.0 C721.2 276.8 720.2 284.2 719.0 291.0 C717.8 297.8 720.2 306.5 716.0 310.0 C711.8 313.5 703.0 310.3 694.0 312.0 C685.0 313.7 669.7 319.0 662.0 320.0 C654.3 321.0 648.3 323.8 648.0 318.0 C647.7 312.2 654.0 295.3 660.0 285.0 C666.0 274.7 675.8 265.3 684.0 256.0 C692.2 246.7 701.2 237.0 709.0 229.0 C716.8 221.0 727.3 210.0 731.0 208.0Z" fill="#050505" filter="url(#soft1)"/>
<path d="M936.0 182.0 C937.0 179.3 963.2 196.8 975.0 205.0 C986.8 213.2 996.2 219.8 1007.0 231.0 C1017.8 242.2 1030.8 255.5 1040.0 272.0 C1049.2 288.5 1057.3 312.0 1062.0 330.0 C1066.7 348.0 1067.7 370.0 1068.0 380.0 C1068.3 390.0 1066.2 395.0 1064.0 390.0 C1061.8 385.0 1058.2 361.3 1055.0 350.0 C1051.8 338.7 1049.7 331.0 1045.0 322.0 C1040.3 313.0 1034.5 302.0 1027.0 296.0 C1019.5 290.0 1005.5 292.7 1000.0 286.0 C994.5 279.3 999.2 266.8 994.0 256.0 C988.8 245.2 978.7 233.3 969.0 221.0 C959.3 208.7 935.0 184.7 936.0 182.0Z" fill="#050505" filter="url(#soft1)"/>
<path d="M784.0 235.0 C787.8 230.5 798.0 227.2 805.0 228.0 C812.0 228.8 822.2 233.0 826.0 240.0 C829.8 247.0 830.3 263.0 828.0 270.0 C825.7 277.0 818.3 281.0 812.0 282.0 C805.7 283.0 795.0 280.5 790.0 276.0 C785.0 271.5 783.0 261.8 782.0 255.0 C781.0 248.2 780.2 239.5 784.0 235.0Z" fill="#2a2a2a" filter="url(#soft)"/>
<path d="M875.0 238.0 C878.7 230.8 893.0 230.0 900.0 232.0 C907.0 234.0 914.5 241.7 917.0 250.0 C919.5 258.3 918.7 275.3 915.0 282.0 C911.3 288.7 901.2 291.2 895.0 290.0 C888.8 288.8 881.3 283.7 878.0 275.0 C874.7 266.3 871.3 245.2 875.0 238.0Z" fill="#2a2a2a" filter="url(#soft)"/>
<path d="M800.0 300.0 C805.8 295.7 826.7 292.7 840.0 292.0 C853.3 291.3 867.5 294.7 880.0 296.0 C892.5 297.3 909.7 296.3 915.0 300.0 C920.3 303.7 921.2 314.3 912.0 318.0 C902.8 321.7 877.8 322.0 860.0 322.0 C842.2 322.0 815.0 321.7 805.0 318.0 C795.0 314.3 794.2 304.3 800.0 300.0Z" fill="#505050" filter="url(#soft)"/>
<path d="M800.0 218.0 C807.5 215.7 833.3 215.3 850.0 216.0 C866.7 216.7 893.3 219.3 900.0 222.0 C906.7 224.7 898.3 231.0 890.0 232.0 C881.7 233.0 864.2 228.3 850.0 228.0 C835.8 227.7 813.3 231.7 805.0 230.0 C796.7 228.3 792.5 220.3 800.0 218.0Z" fill="#555" filter="url(#soft)"/>
<path d="M930.0 300.0 C935.0 300.0 944.2 320.0 945.0 330.0 C945.8 340.0 939.2 355.0 935.0 360.0 C930.8 365.0 923.3 365.0 920.0 360.0 C916.7 355.0 913.3 340.0 915.0 330.0 C916.7 320.0 925.0 300.0 930.0 300.0Z" fill="#3a3a3a" filter="url(#soft)"/>
<path d="M736.0 405.0 C736.7 397.7 746.3 391.5 752.0 384.0 C757.7 376.5 765.0 364.7 770.0 360.0 C775.0 355.3 778.7 353.5 782.0 356.0 C785.3 358.5 788.7 365.7 790.0 375.0 C791.3 384.3 793.3 402.8 790.0 412.0 C786.7 421.2 777.0 427.3 770.0 430.0 C763.0 432.7 753.7 432.2 748.0 428.0 C742.3 423.8 735.3 412.3 736.0 405.0Z" fill="#0a0a0a" filter="url(#soft)"/>
<path d="M940.0 330.0 C943.0 324.8 952.7 331.5 956.0 338.0 C959.3 344.5 956.8 359.3 960.0 369.0 C963.2 378.7 973.3 389.2 975.0 396.0 C976.7 402.8 974.5 407.3 970.0 410.0 C965.5 412.7 953.3 418.8 948.0 412.0 C942.7 405.2 939.3 382.7 938.0 369.0 C936.7 355.3 937.0 335.2 940.0 330.0Z" fill="#111" filter="url(#soft)"/>
<path d="M618.0 445.0 C621.0 434.7 628.0 423.8 640.0 420.0 C652.0 416.2 673.3 420.0 690.0 422.0 C706.7 424.0 730.8 424.0 740.0 432.0 C749.2 440.0 745.8 459.0 745.0 470.0 C744.2 481.0 744.2 492.7 735.0 498.0 C725.8 503.3 705.0 501.7 690.0 502.0 C675.0 502.3 656.3 503.3 645.0 500.0 C633.7 496.7 626.5 491.2 622.0 482.0 C617.5 472.8 615.0 455.3 618.0 445.0Z" fill="#848484" filter="url(#tex)"/>
<path d="M1043.0 380.0 C1048.5 378.3 1067.8 383.2 1076.0 390.0 C1084.2 396.8 1089.0 411.8 1092.0 421.0 C1095.0 430.2 1096.0 438.2 1094.0 445.0 C1092.0 451.8 1084.3 457.8 1080.0 462.0 C1075.7 466.2 1072.8 471.3 1068.0 470.0 C1063.2 468.7 1057.8 458.8 1051.0 454.0 C1044.2 449.2 1033.2 445.8 1027.0 441.0 C1020.8 436.2 1011.3 431.8 1014.0 425.0 C1016.7 418.2 1038.2 407.5 1043.0 400.0 C1047.8 392.5 1037.5 381.7 1043.0 380.0Z" fill="#8a8a8a" filter="url(#tex)"/>
<path d="M930.0 362.0 C933.7 355.3 945.3 353.7 950.0 360.0 C954.7 366.3 955.5 389.2 958.0 400.0 C960.5 410.8 968.8 420.3 965.0 425.0 C961.2 429.7 941.2 432.2 935.0 428.0 C928.8 423.8 928.8 411.0 928.0 400.0 C927.2 389.0 926.3 368.7 930.0 362.0Z" fill="#1a1a1a" filter="url(#soft)"/>
<path d="M705.0 512.0 C711.7 502.8 730.0 499.5 740.0 505.0 C750.0 510.5 760.0 529.2 765.0 545.0 C770.0 560.8 773.3 585.8 770.0 600.0 C766.7 614.2 754.2 630.0 745.0 630.0 C735.8 630.0 722.5 611.7 715.0 600.0 C707.5 588.3 701.7 574.7 700.0 560.0 C698.3 545.3 698.3 521.2 705.0 512.0Z" fill="#404040" filter="url(#soft)"/>
<ellipse cx="683" cy="517" rx="6" ry="12" fill="#111" filter="url(#soft)"/>
<ellipse cx="690" cy="550" rx="5" ry="9" fill="#111" filter="url(#soft)"/>
<ellipse cx="665" cy="545" rx="4" ry="5" fill="#222" filter="url(#soft)"/>
<ellipse cx="703" cy="575" rx="5" ry="10" fill="#1a1a1a" filter="url(#soft)"/>
<path d="M765.0 537.0 C774.2 528.7 784.2 538.7 800.0 540.0 C815.8 541.3 842.5 545.0 860.0 545.0 C877.5 545.0 888.3 541.7 905.0 540.0 C921.7 538.3 944.2 534.2 960.0 535.0 C975.8 535.8 991.3 540.8 1000.0 545.0 C1008.7 549.2 1012.0 550.8 1012.0 560.0 C1012.0 569.2 1005.3 589.2 1000.0 600.0 C994.7 610.8 988.3 618.3 980.0 625.0 C971.7 631.7 960.8 635.5 950.0 640.0 C939.2 644.5 927.5 648.0 915.0 652.0 C902.5 656.0 889.2 662.2 875.0 664.0 C860.8 665.8 845.8 664.5 830.0 663.0 C814.2 661.5 792.5 660.5 780.0 655.0 C767.5 649.5 760.8 640.8 755.0 630.0 C749.2 619.2 743.3 605.5 745.0 590.0 C746.7 574.5 755.8 545.3 765.0 537.0Z" fill="#101010" filter="url(#soft1)"/>
<path d="M982.0 441.0 C984.7 437.7 990.0 441.8 996.0 450.0 C1002.0 458.2 1012.5 484.0 1018.0 490.0 C1023.5 496.0 1026.8 492.3 1029.0 486.0 C1031.2 479.7 1029.0 456.7 1031.0 452.0 C1033.0 447.3 1037.7 448.8 1041.0 458.0 C1044.3 467.2 1050.7 499.5 1051.0 507.0 C1051.3 514.5 1047.0 503.0 1043.0 503.0 C1039.0 503.0 1032.5 503.0 1027.0 507.0 C1021.5 511.0 1014.8 518.2 1010.0 527.0 C1005.2 535.8 1005.2 554.5 998.0 560.0 C990.8 565.5 971.8 567.8 967.0 560.0 C962.2 552.2 966.8 528.0 969.0 513.0 C971.2 498.0 977.8 482.0 980.0 470.0 C982.2 458.0 979.3 444.3 982.0 441.0Z" fill="#080808" filter="url(#soft)"/>
<path d="M774.0 534.0 C778.0 530.3 794.0 530.3 798.0 534.0 C802.0 537.7 802.0 552.3 798.0 556.0 C794.0 559.7 778.0 559.7 774.0 556.0 C770.0 552.3 770.0 537.7 774.0 534.0Z" fill="#9c9c9c" filter="url(#soft)"/>
<path d="M735.0 575.0 C740.3 565.3 765.0 569.5 780.0 572.0 C795.0 574.5 816.7 578.7 825.0 590.0 C833.3 601.3 835.8 629.7 830.0 640.0 C824.2 650.3 803.7 653.7 790.0 652.0 C776.3 650.3 757.2 642.8 748.0 630.0 C738.8 617.2 729.7 584.7 735.0 575.0Z" fill="#565656" filter="url(#soft2)"/>
<path d="M805.0 575.0 C810.0 569.5 822.2 569.8 830.0 572.0 C837.8 574.2 849.0 580.3 852.0 588.0 C855.0 595.7 853.3 612.3 848.0 618.0 C842.7 623.7 828.0 624.2 820.0 622.0 C812.0 619.8 802.5 612.8 800.0 605.0 C797.5 597.2 800.0 580.5 805.0 575.0Z" fill="#7c7c7c" filter="url(#soft)"/>
<path d="M982.0 567.0 C985.7 561.2 996.0 561.2 1000.0 565.0 C1004.0 568.8 1005.7 579.5 1006.0 590.0 C1006.3 600.5 1005.5 621.3 1002.0 628.0 C998.5 634.7 989.0 634.7 985.0 630.0 C981.0 625.3 978.5 610.5 978.0 600.0 C977.5 589.5 978.3 572.8 982.0 567.0Z" fill="#969696" filter="url(#soft)"/>
<path d="M915.0 600.0 C917.5 595.0 933.8 590.3 940.0 592.0 C946.2 593.7 954.5 605.0 952.0 610.0 C949.5 615.0 931.2 623.7 925.0 622.0 C918.8 620.3 912.5 605.0 915.0 600.0Z" fill="#7a7a7a" filter="url(#soft)"/>
<path d="M940.0 560.0 C942.5 553.3 959.2 550.8 965.0 555.0 C970.8 559.2 977.5 578.3 975.0 585.0 C972.5 591.7 955.8 599.2 950.0 595.0 C944.2 590.8 937.5 566.7 940.0 560.0Z" fill="#808080" filter="url(#soft)"/>
<path d="M990.0 427.0 C993.0 424.2 1007.8 427.2 1014.0 433.0 C1020.2 438.8 1024.5 453.2 1027.0 462.0 C1029.5 470.8 1030.3 481.3 1029.0 486.0 C1027.7 490.7 1022.5 491.7 1019.0 490.0 C1015.5 488.3 1011.8 482.7 1008.0 476.0 C1004.2 469.3 999.0 458.2 996.0 450.0 C993.0 441.8 987.0 429.8 990.0 427.0Z" fill="#a6a6a6" filter="url(#tex)"/>
<path d="M1039.0 462.0 C1041.3 459.3 1050.2 460.7 1055.0 466.0 C1059.8 471.3 1066.5 484.5 1068.0 494.0 C1069.5 503.5 1066.2 516.8 1064.0 523.0 C1061.8 529.2 1057.2 533.7 1055.0 531.0 C1052.8 528.3 1053.3 515.2 1051.0 507.0 C1048.7 498.8 1043.0 489.5 1041.0 482.0 C1039.0 474.5 1036.7 464.7 1039.0 462.0Z" fill="#a4a4a4" filter="url(#tex)"/>
<path d="M1014.0 507.0 C1020.2 502.3 1040.2 498.3 1047.0 503.0 C1053.8 507.7 1054.3 525.5 1055.0 535.0 C1055.7 544.5 1053.5 550.8 1051.0 560.0 C1048.5 569.2 1046.8 583.3 1040.0 590.0 C1033.2 596.7 1015.0 609.8 1010.0 600.0 C1005.0 590.2 1009.3 546.5 1010.0 531.0 C1010.7 515.5 1007.8 511.7 1014.0 507.0Z" fill="#8e8e8e" filter="url(#tex)"/>
<path d="M982.0 507.0 C984.5 501.5 997.0 504.0 1000.0 510.0 C1003.0 516.0 1002.5 537.5 1000.0 543.0 C997.5 548.5 988.0 549.0 985.0 543.0 C982.0 537.0 979.5 512.5 982.0 507.0Z" fill="#606060" filter="url(#soft)"/>
<path d="M765.0 660.0 C776.8 657.5 812.7 660.7 831.0 663.0 C849.3 665.3 865.7 672.7 875.0 674.0 C884.3 675.3 880.5 675.2 887.0 671.0 C893.5 666.8 904.8 655.3 914.0 649.0 C923.2 642.7 930.5 637.5 942.0 633.0 C953.5 628.5 972.2 627.0 983.0 622.0 C993.8 617.0 1000.2 611.2 1007.0 603.0 C1013.8 594.8 1023.0 582.7 1024.0 573.0 C1025.0 563.3 1010.3 549.7 1013.0 545.0 C1015.7 540.3 1033.7 541.3 1040.0 545.0 C1046.3 548.7 1052.8 557.3 1051.0 567.0 C1049.2 576.7 1038.2 589.3 1029.0 603.0 C1019.8 616.7 1006.0 636.8 996.0 649.0 C986.0 661.2 980.3 667.3 969.0 676.0 C957.7 684.7 941.7 696.0 928.0 701.0 C914.3 706.0 903.2 705.2 887.0 706.0 C870.8 706.8 846.7 706.8 831.0 706.0 C815.3 705.2 804.8 705.7 793.0 701.0 C781.2 696.3 764.7 684.8 760.0 678.0 C755.3 671.2 753.2 662.5 765.0 660.0Z" fill="#a0a0a0" filter="url(#tex)"/>
<path d="M653.0 510.0 C655.5 506.0 664.0 502.8 668.0 505.0 C672.0 507.2 673.5 513.2 677.0 523.0 C680.5 532.8 683.2 552.2 689.0 564.0 C694.8 575.8 704.2 584.2 712.0 594.0 C719.8 603.8 727.2 612.2 736.0 623.0 C744.8 633.8 761.0 649.8 765.0 659.0 C769.0 668.2 766.8 680.0 760.0 678.0 C753.2 676.0 735.0 659.2 724.0 647.0 C713.0 634.8 703.3 618.3 694.0 605.0 C684.7 591.7 674.8 579.7 668.0 567.0 C661.2 554.3 655.5 538.5 653.0 529.0 C650.5 519.5 650.5 514.0 653.0 510.0Z" fill="#9c9c9c" filter="url(#tex)"/>
<path d="M820.0 478.0 C828.8 469.7 852.7 470.0 868.0 470.0 C883.3 470.0 903.0 469.7 912.0 478.0 C921.0 486.3 922.3 508.3 922.0 520.0 C921.7 531.7 925.3 543.3 910.0 548.0 C894.7 552.7 845.8 552.7 830.0 548.0 C814.2 543.3 816.7 531.7 815.0 520.0 C813.3 508.3 811.2 486.3 820.0 478.0Z" fill="#a4a4a4" filter="url(#tex)"/>
<path d="M748.0 484.0 C756.0 483.2 786.3 505.7 800.0 515.0 C813.7 524.3 831.7 535.0 830.0 540.0 C828.3 545.0 803.0 548.3 790.0 545.0 C777.0 541.7 759.0 530.2 752.0 520.0 C745.0 509.8 740.0 484.8 748.0 484.0Z" fill="#8c8c8c" filter="url(#soft)"/>
<path d="M910.0 523.0 C918.5 514.7 949.7 497.8 961.0 490.0 C972.3 482.2 976.5 472.2 978.0 476.0 C979.5 479.8 976.2 503.5 970.0 513.0 C963.8 522.5 951.0 528.5 941.0 533.0 C931.0 537.5 915.2 541.7 910.0 540.0 C904.8 538.3 901.5 531.3 910.0 523.0Z" fill="#909090" filter="url(#tex)"/>
<path d="M809.0 385.0 C810.2 380.8 810.7 377.5 815.0 375.0 C819.3 372.5 827.8 371.3 835.0 370.0 C842.2 368.7 852.5 368.3 858.0 367.0 C863.5 365.7 864.3 362.2 868.0 362.0 C871.7 361.8 874.8 365.0 880.0 366.0 C885.2 367.0 894.5 366.3 899.0 368.0 C903.5 369.7 905.3 371.0 907.0 376.0 C908.7 381.0 909.8 392.3 909.0 398.0 C908.2 403.7 910.2 407.5 902.0 410.0 C893.8 412.5 874.3 413.0 860.0 413.0 C845.7 413.0 824.7 412.2 816.0 410.0 C807.3 407.8 809.2 404.2 808.0 400.0 C806.8 395.8 807.8 389.2 809.0 385.0Z" fill="#000" />
<path d="M795.0 216.0 C795.8 212.8 798.5 206.0 803.0 201.0 C807.5 196.0 813.8 189.7 822.0 186.0 C830.2 182.3 844.2 180.3 852.0 179.0 C859.8 177.7 861.7 175.5 869.0 178.0 C876.3 180.5 889.2 189.0 896.0 194.0 C902.8 199.0 906.7 202.8 910.0 208.0 C913.3 213.2 916.0 220.8 916.0 225.0 C916.0 229.2 913.3 233.3 910.0 233.0 C906.7 232.7 902.5 225.8 896.0 223.0 C889.5 220.2 880.8 217.7 871.0 216.0 C861.2 214.3 847.2 212.7 837.0 213.0 C826.8 213.3 816.5 216.8 810.0 218.0 C803.5 219.2 800.5 220.3 798.0 220.0 C795.5 219.7 794.2 219.2 795.0 216.0Z" fill="#000" />
<path d="M769.0 312.0 C770.8 314.3 775.7 321.8 780.0 326.0 C784.3 330.2 789.2 334.5 795.0 337.0 C800.8 339.5 806.5 340.3 815.0 341.0 C823.5 341.7 840.8 341.0 846.0 341.0" fill="none" stroke="#000" stroke-width="7" stroke-linecap="round" />
<ellipse cx="843" cy="341" rx="7" ry="5.5" fill="#000" />
<circle cx="864" cy="344" r="4.5" fill="#050505" />
<circle cx="885" cy="347" r="3.5" fill="#050505" />
<circle cx="901" cy="343" r="3.5" fill="#050505" />
<circle cx="926" cy="330" r="4.5" fill="#050505" />
<circle cx="929" cy="341" r="4" fill="#050505" />
<circle cx="941" cy="324" r="3.5" fill="#050505" />
<circle cx="950" cy="335" r="3" fill="#050505" />
<circle cx="871" cy="183" r="8.5" fill="#fff" />
<circle cx="886" cy="190" r="12" fill="#fff" />
<circle cx="908" cy="207" r="11.5" fill="#fff" />
<circle cx="767" cy="292" r="22.5" fill="#fff" />
<ellipse cx="735" cy="311" rx="8" ry="10" fill="#d8d8d8" filter="url(#soft)"/>
<path d="M716.0 326.0 C719.2 323.5 720.2 323.7 726.0 322.0 C731.8 320.3 746.0 316.5 751.0 316.0 C756.0 315.5 756.7 314.8 756.0 319.0 C755.3 323.2 750.5 333.7 747.0 341.0 C743.5 348.3 739.5 357.0 735.0 363.0 C730.5 369.0 724.0 373.3 720.0 377.0 C716.0 380.7 712.8 380.2 711.0 385.0 C709.2 389.8 710.5 400.0 709.0 406.0 C707.5 412.0 704.7 418.0 702.0 421.0 C699.3 424.0 695.7 424.8 693.0 424.0 C690.3 423.2 687.2 420.2 686.0 416.0 C684.8 411.8 684.5 406.3 686.0 399.0 C687.5 391.7 691.5 382.3 695.0 372.0 C698.5 361.7 703.5 344.7 707.0 337.0 C710.5 329.3 712.8 328.5 716.0 326.0Z" fill="#fff" />
<path d="M943.0 298.0 C944.5 294.3 950.0 289.2 954.0 287.0 C958.0 284.8 960.2 284.0 967.0 285.0 C973.8 286.0 988.7 288.0 995.0 293.0 C1001.3 298.0 1000.5 306.3 1005.0 315.0 C1009.5 323.7 1016.0 332.8 1022.0 345.0 C1028.0 357.2 1039.2 379.5 1041.0 388.0 C1042.8 396.5 1036.2 394.7 1033.0 396.0 C1029.8 397.3 1026.7 400.0 1022.0 396.0 C1017.3 392.0 1011.3 380.5 1005.0 372.0 C998.7 363.5 991.7 353.7 984.0 345.0 C976.3 336.3 965.5 326.0 959.0 320.0 C952.5 314.0 947.7 312.7 945.0 309.0 C942.3 305.3 941.5 301.7 943.0 298.0Z" fill="#fff" />
<ellipse cx="1002" cy="349" rx="2" ry="2.5" fill="#111" />
<path d="M744.0 475.0 C745.2 470.5 747.7 459.7 752.0 455.0 C756.3 450.3 763.7 448.0 770.0 447.0 C776.3 446.0 784.2 450.8 790.0 449.0 C795.8 447.2 798.0 438.3 805.0 436.0 C812.0 433.7 826.3 433.3 832.0 435.0 C837.7 436.7 836.5 445.7 839.0 446.0 C841.5 446.3 843.5 439.7 847.0 437.0 C850.5 434.3 855.8 430.5 860.0 430.0 C864.2 429.5 868.7 431.5 872.0 434.0 C875.3 436.5 877.0 444.7 880.0 445.0 C883.0 445.3 884.2 437.3 890.0 436.0 C895.8 434.7 908.2 436.3 915.0 437.0 C921.8 437.7 926.7 436.5 931.0 440.0 C935.3 443.5 937.3 458.2 941.0 458.0 C944.7 457.8 948.3 441.8 953.0 439.0 C957.7 436.2 964.2 437.8 969.0 441.0 C973.8 444.2 980.2 453.2 982.0 458.0 C983.8 462.8 982.2 467.0 980.0 470.0 C977.8 473.0 972.2 473.3 969.0 476.0 C965.8 478.7 964.3 481.5 961.0 486.0 C957.7 490.5 954.0 497.8 949.0 503.0 C944.0 508.2 937.2 514.2 931.0 517.0 C924.8 519.8 916.3 520.8 912.0 520.0 C907.7 519.2 907.0 516.2 905.0 512.0 C903.0 507.8 903.3 500.0 900.0 495.0 C896.7 490.0 890.5 482.8 885.0 482.0 C879.5 481.2 872.8 490.0 867.0 490.0 C861.2 490.0 856.2 481.2 850.0 482.0 C843.8 482.8 834.2 490.3 830.0 495.0 C825.8 499.7 826.3 505.5 825.0 510.0 C823.7 514.5 825.0 520.0 822.0 522.0 C819.0 524.0 813.7 524.0 807.0 522.0 C800.3 520.0 790.3 514.5 782.0 510.0 C773.7 505.5 763.2 499.7 757.0 495.0 C750.8 490.3 747.2 485.3 745.0 482.0 C742.8 478.7 742.8 479.5 744.0 475.0Z" fill="#fff" />
<ellipse cx="867" cy="515" rx="36" ry="23" fill="#3c3c3c" filter="url(#tex2)"/>
<path d="M840 477 L844 463 L848 477 Z M879 477 L883 463 L887 477 Z" fill="#333" filter="url(#soft05)"/>
<ellipse cx="782" cy="483" rx="5" ry="4.5" fill="#555" />
<ellipse cx="802" cy="484" rx="1.5" ry="2.5" fill="#333" />
<ellipse cx="941" cy="470" rx="5" ry="10" fill="#5a5a5a" />
<path d="M833.0 536.0 C837.7 534.8 856.0 541.3 868.0 541.0 C880.0 540.7 900.2 532.2 905.0 534.0 C909.8 535.8 902.8 548.3 897.0 552.0 C891.2 555.7 879.5 556.7 870.0 556.0 C860.5 555.3 846.2 551.3 840.0 548.0 C833.8 544.7 828.3 537.2 833.0 536.0Z" fill="#fff" />
<path d="M830.0 575.0 C834.8 574.2 852.5 577.7 860.0 580.0 C867.5 582.3 872.0 585.7 875.0 589.0 C878.0 592.3 878.7 596.5 878.0 600.0 C877.3 603.5 874.3 610.7 871.0 610.0 C867.7 609.3 863.5 598.5 858.0 596.0 C852.5 593.5 842.5 596.8 838.0 595.0 C833.5 593.2 832.3 588.3 831.0 585.0 C829.7 581.7 825.2 575.8 830.0 575.0Z" fill="#fff" />
<circle cx="744" cy="436" r="4.5" fill="#fff" />
<circle cx="929" cy="356" r="5.5" fill="#eee" />
<path d="M601.0 467.0 C600.0 466.3 596.8 463.4 595.0 463.0 C593.2 462.6 591.9 462.8 590.5 464.6 C589.1 466.4 586.8 470.8 586.4 474.0 C586.0 477.2 589.5 480.3 588.4 483.7 C587.2 487.1 581.3 491.4 579.5 494.6 C577.7 497.8 576.8 499.9 577.5 502.8 C578.2 505.8 582.6 510.7 583.6 512.3" fill="none" stroke="#c8c8c8" stroke-width="1.3" stroke-linecap="round" />
<path d="M600.0 474.0 C599.9 476.5 600.2 484.9 599.3 489.0 C598.4 493.1 594.9 495.5 594.6 498.7 C594.3 501.9 595.9 503.4 597.3 508.2 C598.6 513.0 601.8 524.1 602.7 527.3" fill="none" stroke="#c8c8c8" stroke-width="1.3" stroke-linecap="round" />
<ellipse cx="594.6" cy="519" rx="1.5" ry="6" fill="#aaa" />
<path d="M663.0 312.0 C664.5 310.3 667.5 306.0 672.0 302.0 C676.5 298.0 687.0 290.3 690.0 288.0" fill="none" stroke="#9a9a9a" stroke-width="2.2" stroke-linecap="round" filter="url(#soft05)"/>
<circle cx="713" cy="287" r="2" fill="#888" />
</g></svg>
<!-- TOOLBAR -->
<svg style="left:317px;top:128px" width="36" height="752">
<g fill="none" stroke="#fff">
 <!-- chevrons -->
 <path d="M18.5 11.5 L11 18.5 L18.5 25.5 M24.5 11.5 L17 18.5 L24.5 25.5" stroke-width="1.4"/>
 <!-- ruler -->
 <g transform="rotate(-40 18 89.5)"><rect x="5.5" y="85.5" width="25" height="8" stroke-width="1.3"/><path d="M9 86 V89 M12 86 V88 M15 86 V89 M18 86 V88 M21 86 V89 M24 86 V88 M27 86 V89" stroke-width="1"/></g>
 <!-- angle -->
 <path d="M23 118 L8 132.5 H29" stroke-width="1.5"/><path d="M15.5 125.5 Q18.5 128.5 18 132.5" stroke-width="1.3"/>
 <!-- ellipse -->
 <ellipse cx="18" cy="162" rx="10" ry="6.8" stroke-width="1.1" stroke="#ddd"/>
 <!-- move -->
 <path d="M18 259.5 V280.5 M7.5 270 H28.5" stroke-width="1.6" stroke="#eee"/>
 <path d="M14 263.5 L18 259.5 L22 263.5 M14 276.5 L18 280.5 L22 276.5 M11.5 266 L7.5 270 L11.5 274 M24.5 266 L28.5 270 L24.5 274" stroke-width="1.6" stroke="#eee"/>
 <!-- magnifier -->
 <circle cx="15.3" cy="303.3" r="8.2" stroke-width="1.2"/>
 <path d="M22 310 L27.5 315.5" stroke-width="3.6" stroke-linecap="round"/>
 <!-- layout icons -->
 <rect x="8.5" y="620.5" width="19.5" height="9" stroke-width="1.3" stroke="#ddd"/>
 <rect x="8.5" y="632.5" width="8" height="7" stroke-width="1.3" stroke="#ddd"/>
 <rect x="20" y="632.5" width="8" height="7" stroke-width="1.3" stroke="#ddd"/>
 <rect x="8.5" y="656.5" width="9.5" height="19" stroke-width="1.3" stroke="#ddd"/>
 <rect x="20.5" y="656.5" width="7.5" height="8" stroke-width="1.3" stroke="#ddd"/>
 <rect x="20.5" y="667.5" width="7.5" height="8" stroke-width="1.3" stroke="#ddd"/>
 <rect x="8.5" y="692.5" width="5" height="19" stroke-width="1.3" stroke="#ddd"/>
 <rect x="15.5" y="692.5" width="5" height="19" stroke-width="1.3" stroke="#ddd"/>
 <rect x="22.5" y="692.5" width="5.5" height="19" stroke-width="1.3" stroke="#ddd"/>
 <rect x="8.5" y="728.5" width="19.5" height="5" stroke-width="1.3" stroke="#ddd"/>
 <rect x="8.5" y="735.5" width="19.5" height="5.5" stroke-width="1.3" stroke="#ddd"/>
 <path d="M8 742.8 H28.5" stroke-width="1" stroke="#ddd"/>
</g>
 <!-- doc with eye -->
 <path d="M7 43 H19.5 L24 47.5 V64.5 H7 Z" fill="#fff"/>
 <path d="M19.5 43 V47.5 H24" fill="#000" stroke="#000" stroke-width=".6"/>
 <path d="M10.5 49 H14 M10.5 53 H20 M10.5 56.5 H20 M10.5 60 H16" stroke="#000" stroke-width="1.1"/>
 <ellipse cx="23" cy="61" rx="6.5" ry="4" fill="#000" stroke="#000" stroke-width="1.5"/>
 <path d="M16.8 61 Q23 55.5 29.2 61 Q23 66.5 16.8 61 Z" fill="none" stroke="#ddd" stroke-width="1.1"/>
 <circle cx="23" cy="61" r="2.3" fill="none" stroke="#ddd" stroke-width="1.1"/>
 <!-- eraser -->
 <g transform="rotate(-45 18 196)"><rect x="11" y="191.5" width="15" height="10" rx="1.5" fill="none" stroke="#fff" stroke-width="1.6"/><rect x="18" y="191.5" width="8" height="10" fill="#fff"/></g>
 <path d="M8 207.5 H28" stroke="#fff" stroke-width="2"/>
 <!-- brightness -->
 <circle cx="18" cy="234" r="5.8" fill="none" stroke="#fff" stroke-width="1.5"/>
 <path d="M18 228.2 A5.8 5.8 0 0 0 18 239.8 Z" fill="#fff"/>
 <path d="M18 222 V225 M18 243 V246 M6 234 H9 M27 234 H30 M9.5 225.5 L11.5 227.5 M24.5 240.5 L26.5 242.5 M26.5 225.5 L24.5 227.5 M11.5 240.5 L9.5 242.5" stroke="#fff" stroke-width="1.4"/>
 <!-- active rotate button -->
 <rect x="2" y="325.8" width="32" height="32" rx="3.5" fill="#6fd9e8"/>
 <rect x="2" y="325.8" width="32" height="32" rx="3.5" fill="none" stroke="#4fb0c0" stroke-width="1.2" opacity=".7"/>
 <path d="M9.5 336.5 A9.3 9.3 0 0 1 27 339" fill="none" stroke="#fff" stroke-width="1.2"/>
 <path d="M26.8 347 A9.3 9.3 0 0 1 9.2 344.5" fill="none" stroke="#fff" stroke-width="1.2"/>
 <path d="M8 332 L9.5 337 L13.5 335 M28.5 351 L27 346 L23 348" fill="none" stroke="#fff" stroke-width="1.2"/>
 <!-- vertical arrows -->
 <path d="M18 368 V388" stroke="#fff" stroke-width="1.3"/><path d="M14.5 371.5 L18 368 L21.5 371.5 M14.5 384.5 L18 388 L21.5 384.5" fill="none" stroke="#fff" stroke-width="1.4"/><rect x="15.5" y="375.5" width="5" height="5" fill="#fff"/>
 <!-- stack scroll diamond -->
 <path d="M18 403 L24 412 H12 Z M12 417 H24 L18 425 Z" fill="#fff"/><path d="M11 413 H25 M11 415.5 H25 M11 418 H25" stroke="#fff" stroke-width="1.2"/>
 <!-- reset -->
 <path d="M12.2 443.5 A9.3 9.3 0 1 0 19.5 441.3" fill="none" stroke="#fff" stroke-width="1.7"/><path d="M20 437.5 L15 441.5 L20 445.5 Z" fill="#fff"/>
 <path d="M18.00 446.30 L18.98 446.40 L19.42 447.88 L20.06 448.22 L21.54 447.76 L22.16 448.52 L21.42 449.88 L21.63 450.58 L23.00 451.30 L22.90 452.28 L21.42 452.72 L21.08 453.36 L21.54 454.84 L20.78 455.46 L19.42 454.72 L18.72 454.93 L18.00 456.30 L17.02 456.20 L16.58 454.72 L15.94 454.38 L14.46 454.84 L13.84 454.08 L14.58 452.72 L14.37 452.02 L13.00 451.30 L13.10 450.32 L14.58 449.88 L14.92 449.24 L14.46 447.76 L15.22 447.14 L16.58 447.88 L17.28 447.67Z M19.60 451.30 A1.6 1.6 0 1 0 16.40 451.30 A1.6 1.6 0 1 0 19.60 451.30Z" fill="#fff" fill-rule="evenodd"/>
 <!-- reset all -->
 <path d="M15.3 478.3 A7.6 7.6 0 1 0 21.2 476" fill="none" stroke="#fff" stroke-width="1.5"/><path d="M21.8 472.5 L17.8 476 L21.8 479.5 Z" fill="#fff"/>
 <path d="M20.00 480.50 L20.78 480.58 L21.15 481.73 L21.67 482.01 L22.83 481.67 L23.33 482.28 L22.77 483.35 L22.94 483.91 L24.00 484.50 L23.92 485.28 L22.77 485.65 L22.49 486.17 L22.83 487.33 L22.22 487.83 L21.15 487.27 L20.59 487.44 L20.00 488.50 L19.22 488.42 L18.85 487.27 L18.33 486.99 L17.17 487.33 L16.67 486.72 L17.23 485.65 L17.06 485.09 L16.00 484.50 L16.08 483.72 L17.23 483.35 L17.51 482.83 L17.17 481.67 L17.78 481.17 L18.85 481.73 L19.41 481.56Z M21.30 484.50 A1.3 1.3 0 1 0 18.70 484.50 A1.3 1.3 0 1 0 21.30 484.50Z" fill="#fff" fill-rule="evenodd"/>
 <path d="M12.3 488.5 A3.6 3.6 0 0 0 12.3 495.7 Z" fill="#fff"/><path d="M12.3 488.5 A3.6 3.6 0 0 1 15.5 493" fill="none" stroke="#fff" stroke-width=".8"/>
 <path d="M7.5 489 L8.7 490.2 M5.5 492.2 H7.2 M7.5 495.5 L8.7 494.3 M12.3 497.6 V499.2 M15.8 495.8 L17 497" stroke="#fff" stroke-width="1"/>
 <!-- white square button -->
 <rect x="2.4" y="506.4" width="31.2" height="30.6" rx="4" fill="#5fcfdf"/>
 <rect x="4.5" y="508.5" width="27" height="26.5" rx="3" fill="#88e4ee"/>
 <rect x="7" y="511" width="22" height="22" fill="#fff"/>
 <!-- two columns -->
 <rect x="7" y="547" width="9.8" height="22" fill="#fff"/><rect x="19.2" y="547" width="9.8" height="22" fill="#fff"/>
 <!-- cyan button -->
 <rect x="2.5" y="578.2" width="31.5" height="31.3" rx="4" fill="#4fb8c8"/>
 <rect x="4" y="579.7" width="28.5" height="28.3" rx="3" fill="#6fdde9"/>
 <rect x="8.5" y="584.5" width="19.5" height="18.5" fill="#72e2ee" stroke="#fff" stroke-width="1"/>
</svg>
<!-- VIEWER FRAME -->
<div class="abs" style="left:353px;top:128px;width:1025px;height:709px;border-top:2px solid #22899e;border-left:2px solid #22899e;border-right:1px solid #22899e;border-bottom:1px solid #22899e"></div>
<div class="abs" style="left:355px;top:837px;width:1023px;height:1px;background:#3b3232"></div>
<div class="abs" style="left:355px;top:130px;width:1022px;height:706px;border-top:1px solid #3b3232;border-left:1px solid #3b3232;border-right:1px solid #3b3232"></div>
<!-- overlay text -->
<div class="t" style="left:363px;top:137px;font-size:10px;line-height:12px;font-weight:bold;color:#f2f2f2;letter-spacing:0.3px">Patient II<br>00000002<br>10.04.1955 - M<br>BEYIN 1.0mm Kranyum 1.0<br>14.04.2016 14:39:15</div>
<div class="t" style="left:363px;top:806px;font-size:10px;line-height:12px;font-weight:bold;color:#f2f2f2;letter-spacing:0.3px">Image: 1/201<br>W: 100 C: 40</div>
<div class="t" style="left:362px;top:491px;font-size:10px;font-weight:bold;color:#eee">R</div>
<div class="t" style="left:873px;top:138px;font-size:11px;font-weight:bold;color:#e6e6e6">A</div>
<!-- scrollbar -->
<div class="abs" style="left:1364px;top:170px;width:2px;height:638px;background:#0e8db4"></div>
<div class="abs" style="left:1357px;top:144px;width:16px;height:30px;border-radius:7px;background:#0580a8"></div>
<svg style="left:1357px;top:144px" width="16" height="30"><path d="M5 9 L8 6.5 L11 9 M5 20.5 L8 23 L11 20.5" stroke="#fff" stroke-width="1.2" fill="none"/><circle cx="8" cy="14.8" r="1.8" stroke="#fff" stroke-width="1.1" fill="none"/></svg>
<!-- PLAYER BAR -->
<div class="abs" style="left:353px;top:839px;width:1026px;height:40px;border:2px solid #4a4a4a;border-right-width:2px;background:#000"></div>
<div class="abs" style="left:0;top:879px;width:1380px;height:1px;background:#1d4a66"></div>
<div class="t" style="left:360px;top:853.5px;font-size:12px;font-weight:bold;color:#fff;letter-spacing:-0.3px">Player</div>
<!-- PLAYER BUTTONS -->
<svg style="left:405px;top:846px" width="26" height="26"><rect x="1" y="1" width="24" height="24" rx="5" fill="none" stroke="#1a98b0" stroke-width="2"/><rect x="10.5" y="4" width="5" height="2" fill="#fff"/><rect x="10.5" y="7" width="5" height="2" fill="#fff"/><path d="M10.5 10 H15.5 V14 H20 L13 22 L6 14 H10.5 Z" fill="#fff"/></svg>
<svg style="left:443px;top:846px" width="26" height="26"><rect x="1" y="1" width="24" height="24" rx="5" fill="none" stroke="#1a98b0" stroke-width="2"/><path d="M4.5 14 A8.5 8.5 0 0 1 21.5 14" stroke="#fff" stroke-width="1.4" fill="none"/><path d="M5 13.5 A8.5 8.5 0 0 1 7.5 8 L9 9 A6.5 6.5 0 0 0 6.8 13.5 Z" fill="#fff"/><path d="M7.5 8 L12.5 13.5" stroke="#fff" stroke-width="2.2"/><rect x="8.5" y="18.5" width="9" height="2.2" fill="#fff"/></svg>
<svg style="left:481px;top:846px" width="26" height="26"><rect x="1" y="1" width="24" height="24" rx="5" fill="none" stroke="#1a98b0" stroke-width="2"/><path d="M4.5 14 A8.5 8.5 0 0 1 21.5 14" stroke="#fff" stroke-width="1.4" fill="none"/><path d="M21 13.5 A8.5 8.5 0 0 0 18.5 8 L17 9 A6.5 6.5 0 0 1 19.2 13.5 Z" fill="#fff"/><path d="M18.5 8 L13.5 13.5" stroke="#fff" stroke-width="2.2"/><path d="M8.5 19.5 H17.5 M13 15 V24" stroke="#fff" stroke-width="2.2"/></svg>
<svg style="left:777px;top:846px" width="26" height="26"><rect x="1" y="1" width="24" height="24" rx="5" fill="none" stroke="#1a98b0" stroke-width="2"/><rect x="7" y="6" width="1.6" height="14" fill="#fff"/><path d="M18 6 V20 L9.5 13 Z" fill="#fff"/></svg>
<svg style="left:815px;top:846px" width="26" height="26"><rect x="1" y="1" width="24" height="24" rx="5" fill="none" stroke="#1a98b0" stroke-width="2"/><path d="M16.5 6.5 L9.5 13 L16.5 19.5" stroke="#fff" stroke-width="1.4" fill="none"/></svg>
<svg style="left:853px;top:846px" width="26" height="26"><rect x="1" y="1" width="24" height="24" rx="5" fill="none" stroke="#1a98b0" stroke-width="2"/><path d="M9 6 V20 L18.5 13 Z" fill="#fff"/></svg>
<svg style="left:891px;top:846px" width="26" height="26"><rect x="1" y="1" width="24" height="24" rx="5" fill="none" stroke="#1a98b0" stroke-width="2"/><path d="M9.5 6.5 L16.5 13 L9.5 19.5" stroke="#fff" stroke-width="1.4" fill="none"/></svg>
<svg style="left:929px;top:846px" width="26" height="26"><rect x="1" y="1" width="24" height="24" rx="5" fill="none" stroke="#1a98b0" stroke-width="2"/><path d="M8 6 V20 L16.5 13 Z" fill="#fff"/><rect x="17.4" y="6" width="1.6" height="14" fill="#fff"/></svg>
<svg style="left:1112px;top:846px" width="26" height="26"><rect x="1" y="1" width="24" height="24" rx="5" fill="none" stroke="#0c3b46" stroke-width="2"/><path d="M13 7.5 L7 13 L13 18.5 M19 7.5 L13 13 L19 18.5" stroke="#555" stroke-width="1.3" fill="none"/><path d="M19 8 V18 L13.5 13 Z" fill="#555"/></svg>
<svg style="left:1150px;top:846px" width="26" height="26"><rect x="1" y="1" width="24" height="24" rx="5" fill="none" stroke="#0c3b46" stroke-width="2"/><path d="M7 7.5 L13 13 L7 18.5 M13 7.5 L19 13 L13 18.5" stroke="#555" stroke-width="1.3" fill="none"/><path d="M7 8 V18 L12.5 13 Z" fill="#555"/></svg>
<svg style="left:1188px;top:846px" width="26" height="26"><rect x="1" y="1" width="24" height="24" rx="5" fill="none" stroke="#0c3b46" stroke-width="2"/><path d="M5 13 L9 10 V16 Z" fill="#555"/><rect x="10.5" y="7.5" width="10" height="11" rx="1.5" stroke="#555" stroke-width="1.3" fill="none"/><path d="M15.5 7.5 V18.5 M10.5 13 H20.5" stroke="#555" stroke-width="1.3"/></svg>
<svg style="left:1226px;top:846px" width="26" height="26"><rect x="1" y="1" width="24" height="24" rx="5" fill="none" stroke="#1a98b0" stroke-width="2"/><circle cx="7" cy="13.3" r="2.4" fill="#fff"/><circle cx="13" cy="13.3" r="2.4" fill="#fff"/><circle cx="19" cy="13.3" r="2.4" fill="#fff"/></svg>
<svg style="left:1264px;top:846px" width="26" height="26"><rect x="1" y="1" width="24" height="24" rx="5" fill="none" stroke="#0c3b46" stroke-width="2"/><path d="M21 13 L17 10 V16 Z" fill="#555"/><rect x="5.5" y="7.5" width="10" height="11" rx="1.5" stroke="#555" stroke-width="1.3" fill="none"/><path d="M10.5 7.5 V18.5 M5.5 13 H15.5" stroke="#555" stroke-width="1.3"/></svg>
<svg style="left:1302px;top:846px" width="26" height="26"><rect x="1" y="1" width="24" height="24" rx="5" fill="none" stroke="#1a98b0" stroke-width="2"/><path d="M3.5 13 L8 10 V16 Z" fill="#fff"/><circle cx="15" cy="9.5" r="3.3" fill="#fff"/><path d="M8.5 19.5 Q9.5 14 15 14 Q20.5 14 21.5 19.5 Z" fill="#fff"/></svg>
<svg style="left:1340px;top:846px" width="26" height="26"><rect x="1" y="1" width="24" height="24" rx="5" fill="none" stroke="#1a98b0" stroke-width="2"/><path d="M22.5 13 L18 10 V16 Z" fill="#fff"/><circle cx="11" cy="9.5" r="3.3" fill="#fff"/><path d="M4.5 19.5 Q5.5 14 11 14 Q16.5 14 17.5 19.5 Z" fill="#fff"/></svg>
</body></html>
